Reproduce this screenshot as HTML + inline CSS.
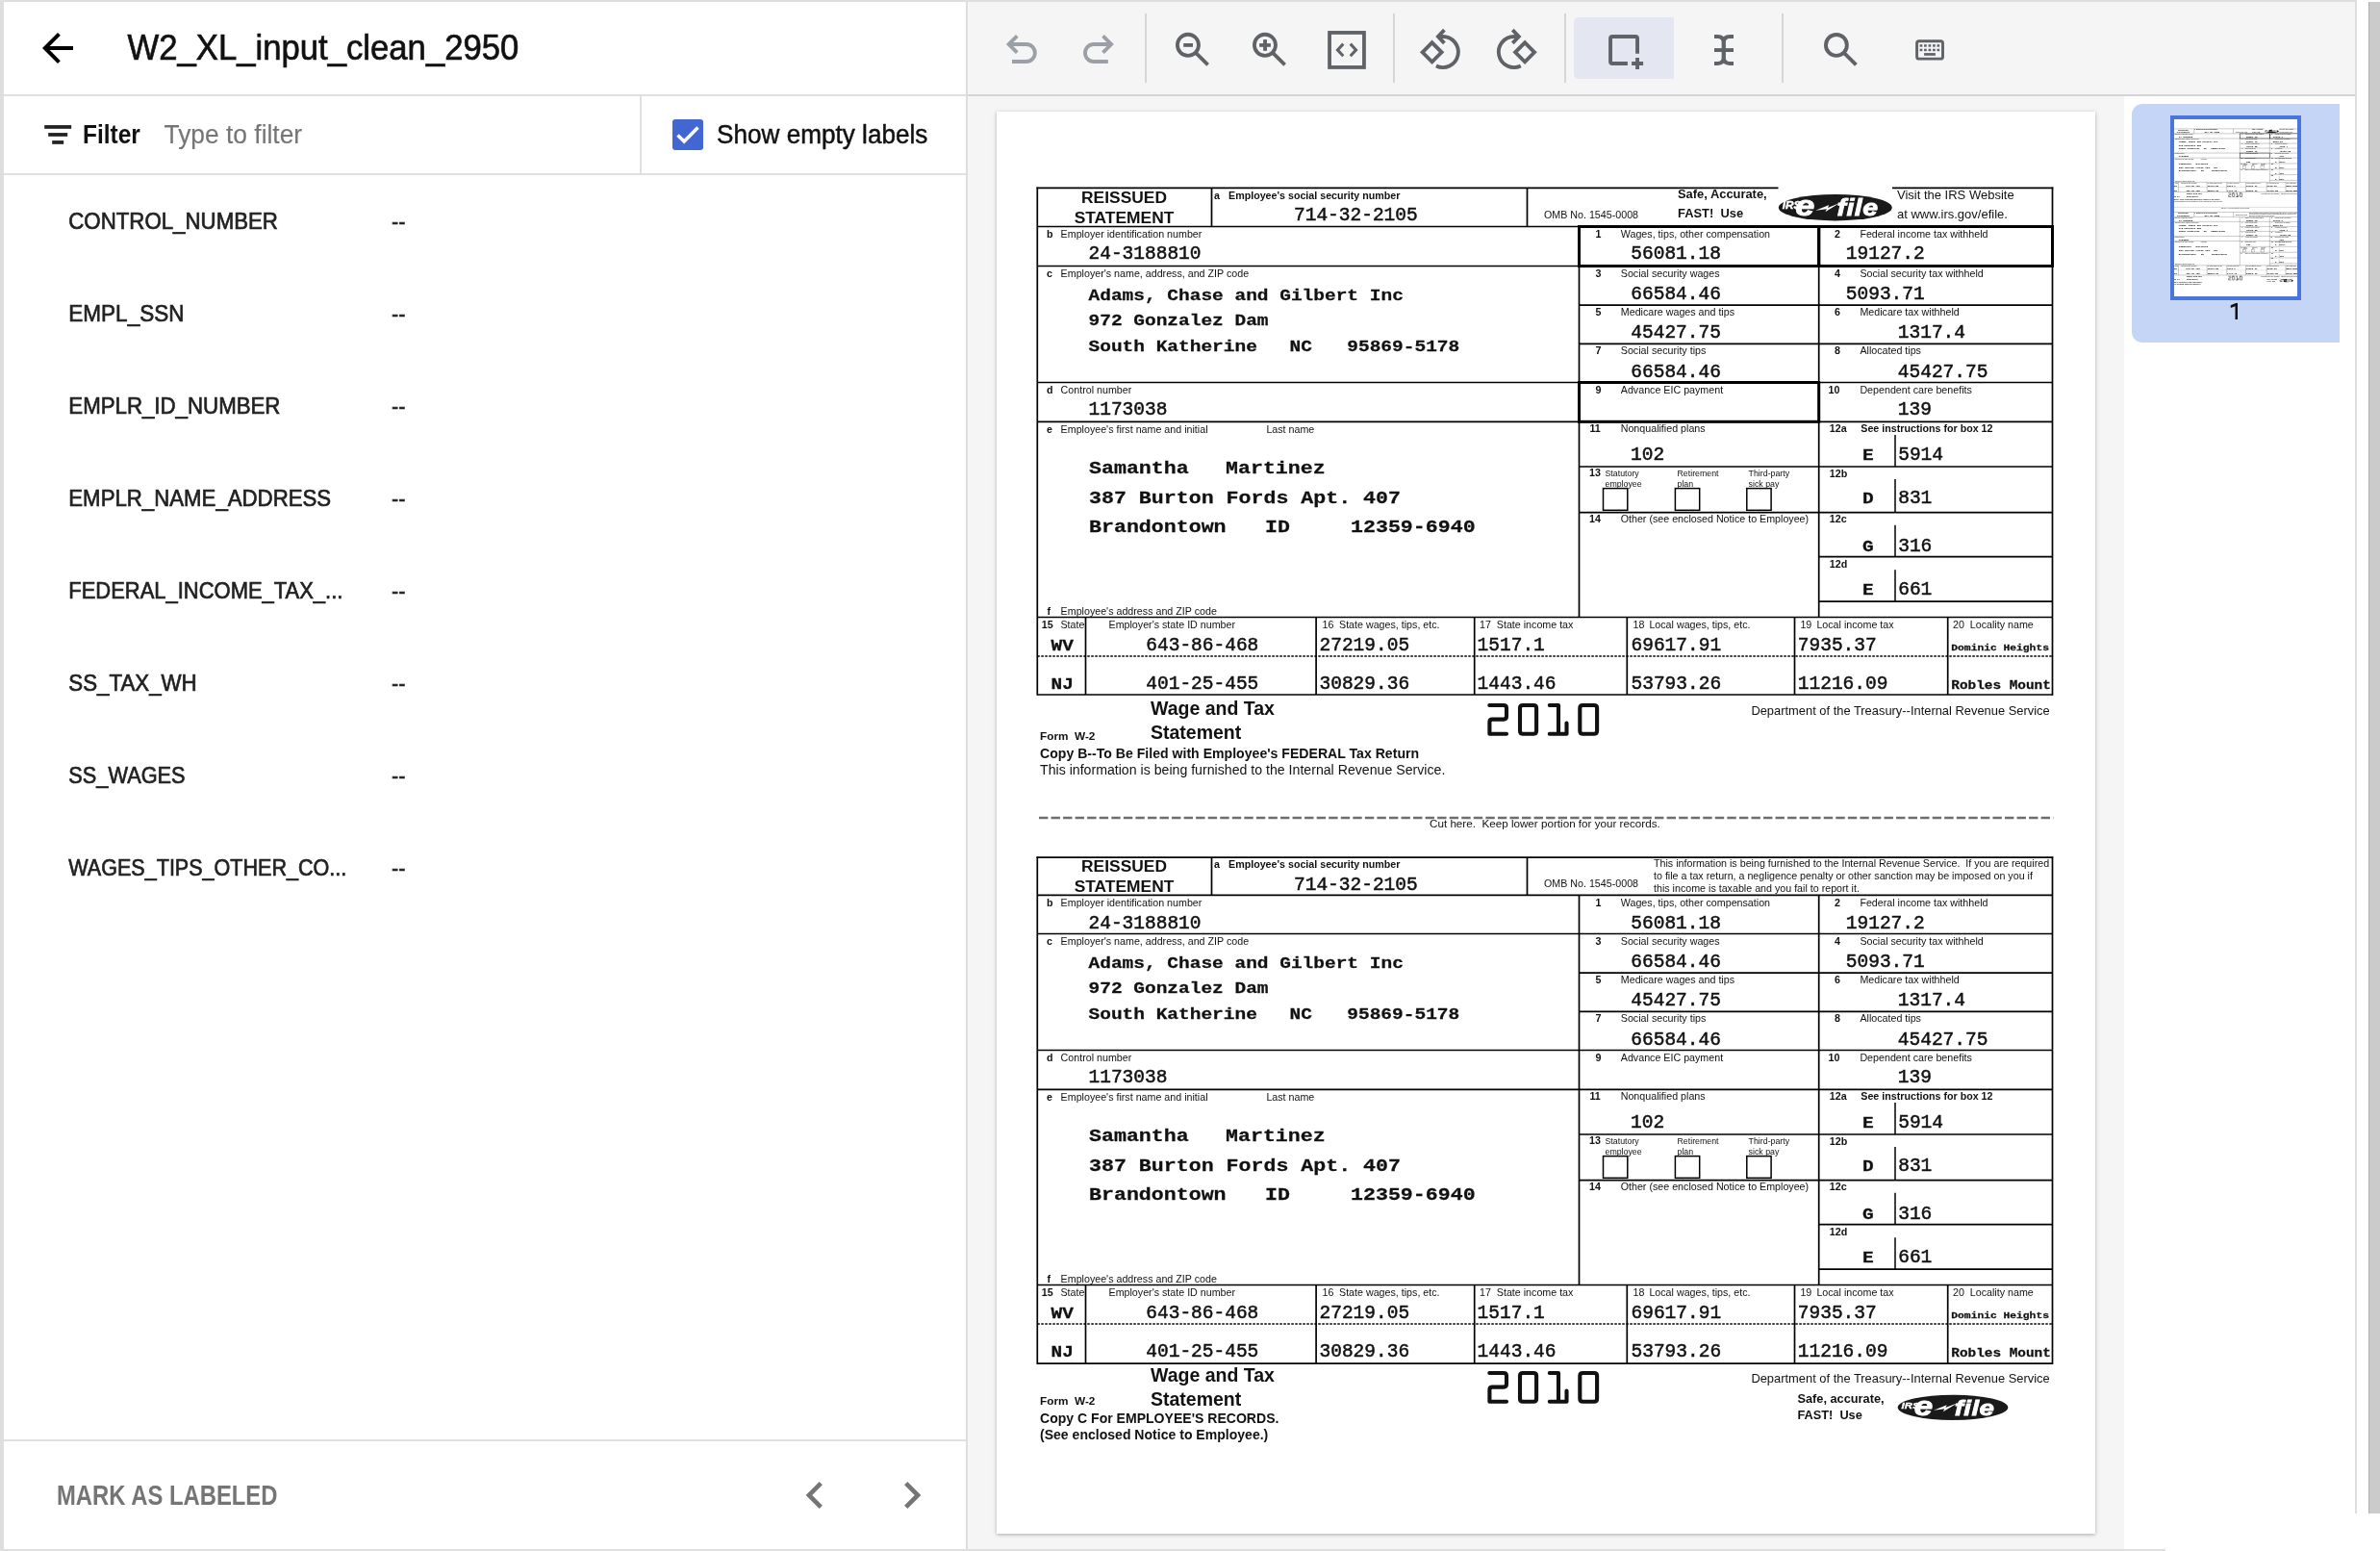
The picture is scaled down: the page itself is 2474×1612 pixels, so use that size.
<!DOCTYPE html>
<html><head><meta charset="utf-8"><title>W2_XL_input_clean_2950</title>
<style>
html,body{margin:0;padding:0;width:2474px;height:1612px;overflow:hidden;background:#fff}
body{position:relative;font-family:"Liberation Sans",sans-serif}
.a{position:absolute}
.S{font-family:"Liberation Sans",sans-serif}
.M{font-family:"Liberation Mono",monospace}
.lab{position:absolute;left:72px;font-size:22px;line-height:24px;color:#212121;white-space:pre}
.dash{position:absolute;left:407px;font-size:22px;line-height:24px;color:#212121}
</style></head>
<body>
<div style="position:absolute;left:0;top:0;width:2474px;height:1612px;overflow:hidden;will-change:transform">
<!-- frame -->
<div class="a" style="left:0;top:0;width:2450px;height:2px;background:#dedede"></div>
<div class="a" style="left:0;top:0;width:4px;height:1612px;background:#dedede"></div>
<div class="a" style="left:0;top:1610px;width:2251px;height:2px;background:#dedede"></div>
<!-- left panel -->
<div class="a" style="left:4px;top:98px;width:1001px;height:2px;background:#e0e0e0"></div>
<div class="a" style="left:4px;top:180px;width:1001px;height:2px;background:#e0e0e0"></div>
<div class="a" style="left:665px;top:100px;width:2px;height:80px;background:#e0e0e0"></div>
<div class="a" style="left:4px;top:1496px;width:1001px;height:2px;background:#e0e0e0"></div>
<div class="a" style="left:1004px;top:0;width:2px;height:1612px;background:#dedede"></div>
<svg class="a" style="left:36px;top:26px" width="48" height="48" viewBox="0 0 24 24" fill="#000"><path d="M20 11H7.83l5.59-5.59L12 4l-8 8 8 8 1.41-1.41L7.83 13H20v-2z"/></svg>
<svg class="a" style="left:42px;top:120px" width="36" height="36" viewBox="0 0 36 36" fill="#212121"><rect x="4.2" y="10.1" width="28" height="3.7"/><rect x="8.2" y="18.1" width="20" height="3.7"/><rect x="12.2" y="26.1" width="12" height="3.7"/></svg>
<div class="a" style="left:699px;top:124px;width:32px;height:32px;background:#4266d2;border-radius:3px"></div>
<svg class="a" style="left:699px;top:124px" width="32" height="32" viewBox="0 0 32 32"><path d="M5.5 16.5 L12.2 23 L26.5 8.5" fill="none" stroke="#fff" stroke-width="3.6"/></svg>
<svg class="a" style="left:819px;top:1526px" width="56" height="56" viewBox="0 0 24 24" fill="#757575"><path d="M15.41 7.41L14 6l-6 6 6 6 1.41-1.41L10.83 12z"/></svg>
<svg class="a" style="left:920px;top:1526px" width="56" height="56" viewBox="0 0 24 24" fill="#757575"><path d="M10 6L8.59 7.41 13.17 12l-4.58 4.59L10 18l6-6z"/></svg>
<svg class="a" style="left:0;top:0" width="1006" height="1612">
<text class="S" transform="matrix(0.925,0,0,1.0,132.5,62)" font-size="37.5" stroke="#111" stroke-width="0.7" fill="#111" style="white-space:pre">W2_XL_input_clean_2950</text>
<text class="S" transform="matrix(0.9,0,0,1.0,86,149)" font-size="27.2" font-weight="700" fill="#111" style="white-space:pre">Filter</text>
<text class="S" transform="matrix(0.97,0,0,1.0,170.5,149)" font-size="27.2" stroke="#757575" stroke-width="0.15" fill="#757575" style="white-space:pre">Type to filter</text>
<text class="S" transform="matrix(0.927,0,0,1.0,745,149.4)" font-size="28.2" stroke="#111" stroke-width="0.5" fill="#111" style="white-space:pre">Show empty labels</text>
<text class="S" transform="matrix(0.9018,0,0,1.0,71.3,238)" font-size="24.7" stroke="#212121" stroke-width="0.7" fill="#212121" style="white-space:pre">CONTROL_NUMBER</text>
<text class="S" transform="matrix(0.88,0,0,1.0,407,238)" font-size="24.7" stroke="#212121" stroke-width="0.5" fill="#212121" style="white-space:pre">--</text>
<text class="S" transform="matrix(0.9126,0,0,1.0,71.3,334)" font-size="24.7" stroke="#212121" stroke-width="0.7" fill="#212121" style="white-space:pre">EMPL_SSN</text>
<text class="S" transform="matrix(0.88,0,0,1.0,407,334)" font-size="24.7" stroke="#212121" stroke-width="0.5" fill="#212121" style="white-space:pre">--</text>
<text class="S" transform="matrix(0.9018,0,0,1.0,71.3,430)" font-size="24.7" stroke="#212121" stroke-width="0.7" fill="#212121" style="white-space:pre">EMPLR_ID_NUMBER</text>
<text class="S" transform="matrix(0.88,0,0,1.0,407,430)" font-size="24.7" stroke="#212121" stroke-width="0.5" fill="#212121" style="white-space:pre">--</text>
<text class="S" transform="matrix(0.9,0,0,1.0,71.3,526)" font-size="24.7" stroke="#212121" stroke-width="0.7" fill="#212121" style="white-space:pre">EMPLR_NAME_ADDRESS</text>
<text class="S" transform="matrix(0.88,0,0,1.0,407,526)" font-size="24.7" stroke="#212121" stroke-width="0.5" fill="#212121" style="white-space:pre">--</text>
<text class="S" transform="matrix(0.8892,0,0,1.0,71.3,622)" font-size="24.7" stroke="#212121" stroke-width="0.7" fill="#212121" style="white-space:pre">FEDERAL_INCOME_TAX_...</text>
<text class="S" transform="matrix(0.88,0,0,1.0,407,622)" font-size="24.7" stroke="#212121" stroke-width="0.5" fill="#212121" style="white-space:pre">--</text>
<text class="S" transform="matrix(0.9036,0,0,1.0,71.3,718)" font-size="24.7" stroke="#212121" stroke-width="0.7" fill="#212121" style="white-space:pre">SS_TAX_WH</text>
<text class="S" transform="matrix(0.88,0,0,1.0,407,718)" font-size="24.7" stroke="#212121" stroke-width="0.5" fill="#212121" style="white-space:pre">--</text>
<text class="S" transform="matrix(0.8811,0,0,1.0,71.3,814)" font-size="24.7" stroke="#212121" stroke-width="0.7" fill="#212121" style="white-space:pre">SS_WAGES</text>
<text class="S" transform="matrix(0.88,0,0,1.0,407,814)" font-size="24.7" stroke="#212121" stroke-width="0.5" fill="#212121" style="white-space:pre">--</text>
<text class="S" transform="matrix(0.873,0,0,1.0,71.3,910)" font-size="24.7" stroke="#212121" stroke-width="0.7" fill="#212121" style="white-space:pre">WAGES_TIPS_OTHER_CO...</text>
<text class="S" transform="matrix(0.88,0,0,1.0,407,910)" font-size="24.7" stroke="#212121" stroke-width="0.5" fill="#212121" style="white-space:pre">--</text>
<text class="S" transform="matrix(0.822,0,0,1.0,59,1564)" font-size="29" font-weight="700" fill="#757575" style="white-space:pre">MARK AS LABELED</text>
</svg>
<!-- toolbar -->
<div class="a" style="left:1006px;top:2px;width:1442px;height:96px;background:#f5f5f5"></div>
<div class="a" style="left:1006px;top:98px;width:1442px;height:2px;background:#d4d4d4"></div>
<div class="a" style="left:1190px;top:14px;width:2px;height:72px;background:#d6d6d6"></div>
<div class="a" style="left:1448px;top:14px;width:2px;height:72px;background:#d6d6d6"></div>
<div class="a" style="left:1626px;top:14px;width:2px;height:72px;background:#d6d6d6"></div>
<div class="a" style="left:1852px;top:14px;width:2px;height:72px;background:#d6d6d6"></div>
<svg class="a" style="left:0;top:0" width="2474" height="100"><g fill="none" stroke="#9aa0a6" stroke-width="3.8"><path d="M1057.3,37.3 L1048.6,46 L1057.3,54.7 M1049,46 H1066.85 A9,9 0 0 1 1066.85,64 H1052"/><path transform="translate(2203.8,0) scale(-1,1)" d="M1057.3,37.3 L1048.6,46 L1057.3,54.7 M1049,46 H1066.85 A9,9 0 0 1 1066.85,64 H1052"/></g><g fill="none" stroke="#5f6368" stroke-width="3.8"><circle cx="1234.95" cy="46.8" r="11.05"/><path d="M1242.8,54.6 L1255.6,67.4"/><circle cx="1314.95" cy="46.8" r="11.05"/><path d="M1322.8,54.6 L1335.6,67.4"/><rect x="1382.05" y="33.95" width="35.9" height="36"/></g><g fill="#5f6368"><rect x="1230.2" y="45" width="9.8" height="3.8"/><rect x="1309.1" y="45.1" width="11.8" height="3.7"/><rect x="1313.1" y="41.1" width="3.9" height="11.7"/></g><g fill="none" stroke="#5f6368" stroke-width="3"><path d="M1396.3,45.6 L1390.4,51.9 L1396.3,58.2"/><path d="M1403.7,45.6 L1409.6,51.9 L1403.7,58.2"/></g><g fill="none" stroke="#5f6368" stroke-width="3.85"><path d="M1478.63,54.3 L1488.6,44.33 L1498.57,54.3 L1488.6,64.27 Z"/><path d="M1501.4,31.2 L1494.9,38 L1501.4,44.8"/><path d="M1495.5,38 H1499.8 A16.05,16.05 0 1 1 1492.9,68.54"/><g transform="translate(3073.7,0) scale(-1,1)"><path d="M1478.63,54.3 L1488.6,44.33 L1498.57,54.3 L1488.6,64.27 Z"/><path d="M1501.4,31.2 L1494.9,38 L1501.4,44.8"/><path d="M1495.5,38 H1499.8 A16.05,16.05 0 1 1 1492.9,68.54"/></g></g><rect x="1636" y="18" width="104" height="64" rx="5" fill="#e4e7f2"/><rect x="1730" y="18" width="10" height="64" fill="#e4e7f2"/><g fill="none" stroke="#5f6368" stroke-width="3.9"><path d="M1691.9,65.95 H1676.05 Q1674.05,65.95 1674.05,63.95 V39.95 Q1674.05,37.95 1676.05,37.95 H1700.05 Q1702.05,37.95 1702.05,39.95 V55.8"/><path d="M1702.05,60.1 V71.9 M1696.1,65.95 H1708.1"/><path d="M1782,38.05 H1785.5 Q1791.75,38.05 1791.75,44.5 V59.5 Q1791.75,65.95 1785.5,65.95 H1782"/><path d="M1802,38.05 H1798 Q1791.75,38.05 1791.75,44.5 V59.5 Q1791.75,65.95 1798,65.95 H1802"/><path d="M1782,52.05 H1802"/><circle cx="1908.9" cy="46.9" r="10.95"/><path d="M1916.8,54.8 L1929.4,67.4"/></g><rect x="1992.6" y="42.8" width="26.9" height="18.3" rx="2.2" fill="none" stroke="#5f6368" stroke-width="2.9"/><g fill="#5f6368"><rect x="1995.60" y="46.2" width="2.7" height="2.5"/><rect x="1995.60" y="50.7" width="2.7" height="2.5"/><rect x="2000.08" y="46.2" width="2.7" height="2.5"/><rect x="2000.08" y="50.7" width="2.7" height="2.5"/><rect x="2004.56" y="46.2" width="2.7" height="2.5"/><rect x="2004.56" y="50.7" width="2.7" height="2.5"/><rect x="2009.04" y="46.2" width="2.7" height="2.5"/><rect x="2009.04" y="50.7" width="2.7" height="2.5"/><rect x="2013.52" y="46.2" width="2.7" height="2.5"/><rect x="2013.52" y="50.7" width="2.7" height="2.5"/><rect x="2000.1" y="55.1" width="11.8" height="2.7"/></g></svg>
<!-- document viewer -->
<div class="a" style="left:1006px;top:100px;width:1202px;height:1510px;background:#f5f5f5"></div>
<div class="a" style="left:1036px;top:116px;width:1142px;height:1478px;background:#fff;box-shadow:0 1px 3px rgba(0,0,0,.22),0 1px 6px rgba(0,0,0,.10)"></div>
<svg class="a" style="left:0;top:0;overflow:visible" width="2474" height="1612">
<line x1="1077.5" y1="195.3" x2="1848.5" y2="195.3" stroke="#000" stroke-width="1.7"/>
<line x1="1967.0" y1="195.3" x2="2134.3" y2="195.3" stroke="#000" stroke-width="1.7"/>
<line x1="1078.3" y1="194.5" x2="1078.3" y2="722.8" stroke="#000" stroke-width="1.7"/>
<line x1="2133.5" y1="194.5" x2="2133.5" y2="722.8" stroke="#000" stroke-width="1.7"/>
<line x1="1078.3" y1="235.5" x2="2133.5" y2="235.5" stroke="#000" stroke-width="1.7"/>
<line x1="1259.5" y1="195.3" x2="1259.5" y2="235.5" stroke="#000" stroke-width="1.7"/>
<line x1="1587.5" y1="195.3" x2="1587.5" y2="235.5" stroke="#000" stroke-width="1.7"/>
<line x1="1078.3" y1="276.5" x2="2133.5" y2="276.5" stroke="#000" stroke-width="1.7"/>
<line x1="1078.3" y1="397.5" x2="2133.5" y2="397.5" stroke="#000" stroke-width="1.7"/>
<line x1="1078.3" y1="438.3" x2="2133.5" y2="438.3" stroke="#000" stroke-width="1.7"/>
<line x1="1078.3" y1="641.5" x2="2133.5" y2="641.5" stroke="#000" stroke-width="1.7"/>
<line x1="1078.3" y1="722.0" x2="2133.5" y2="722.0" stroke="#000" stroke-width="1.7"/>
<line x1="1641.5" y1="317.2" x2="2133.5" y2="317.2" stroke="#000" stroke-width="1.7"/>
<line x1="1641.5" y1="357.4" x2="2133.5" y2="357.4" stroke="#000" stroke-width="1.7"/>
<line x1="1641.5" y1="485.0" x2="2133.5" y2="485.0" stroke="#000" stroke-width="1.7"/>
<line x1="1641.5" y1="532.6" x2="2133.5" y2="532.6" stroke="#000" stroke-width="1.7"/>
<line x1="1890.7" y1="578.6" x2="2133.5" y2="578.6" stroke="#000" stroke-width="1.7"/>
<line x1="1890.7" y1="625.1" x2="2133.5" y2="625.1" stroke="#000" stroke-width="1.7"/>
<line x1="1641.5" y1="235.5" x2="1641.5" y2="641.5" stroke="#000" stroke-width="1.7"/>
<line x1="1890.7" y1="235.5" x2="1890.7" y2="641.5" stroke="#000" stroke-width="1.7"/>
<line x1="1970.0" y1="452.0" x2="1970.0" y2="485.0" stroke="#000" stroke-width="1.5"/>
<line x1="1970.0" y1="498.0" x2="1970.0" y2="532.6" stroke="#000" stroke-width="1.5"/>
<line x1="1970.0" y1="545.7" x2="1970.0" y2="578.6" stroke="#000" stroke-width="1.5"/>
<line x1="1970.0" y1="592.2" x2="1970.0" y2="625.1" stroke="#000" stroke-width="1.5"/>
<line x1="1128.5" y1="641.5" x2="1128.5" y2="722.0" stroke="#000" stroke-width="1.7"/>
<line x1="1368.1" y1="641.5" x2="1368.1" y2="722.0" stroke="#000" stroke-width="1.7"/>
<line x1="1532.7" y1="641.5" x2="1532.7" y2="722.0" stroke="#000" stroke-width="1.7"/>
<line x1="1691.3" y1="641.5" x2="1691.3" y2="722.0" stroke="#000" stroke-width="1.7"/>
<line x1="1865.5" y1="641.5" x2="1865.5" y2="722.0" stroke="#000" stroke-width="1.7"/>
<line x1="2024.7" y1="641.5" x2="2024.7" y2="722.0" stroke="#000" stroke-width="1.7"/>
<line x1="1078.3" y1="682.0" x2="2133.5" y2="682.0" stroke="#000" stroke-width="1.4" stroke-dasharray="2.5 1.5"/>
<rect x="1641.5" y="235.5" width="249.2" height="41.0" fill="none" stroke="#000" stroke-width="3.0"/>
<rect x="1890.7" y="235.5" width="242.8" height="41.0" fill="none" stroke="#000" stroke-width="3.0"/>
<rect x="1641.5" y="397.5" width="249.2" height="40.8" fill="none" stroke="#000" stroke-width="3.0"/>
<rect x="1666.5" y="507.6" width="25.3" height="22.7" fill="none" stroke="#000" stroke-width="1.5"/>
<rect x="1741.4" y="507.6" width="25.3" height="22.7" fill="none" stroke="#000" stroke-width="1.5"/>
<rect x="1815.8" y="507.6" width="25.3" height="22.7" fill="none" stroke="#000" stroke-width="1.5"/>
<text class="S" x="1168.5" y="210.5" font-size="17.4" font-weight="700" text-anchor="middle" fill="#111">REISSUED</text>
<text class="S" x="1168.5" y="232.0" font-size="17.4" font-weight="700" text-anchor="middle" fill="#111">STATEMENT</text>
<text class="S" x="1262.0" y="207.0" font-size="10.7" font-weight="700" fill="#111">a</text>
<text class="S" x="1277.0" y="207.0" font-size="10.7" font-weight="700" fill="#111">Employee's social security number</text>
<text class="M" x="1345.0" y="228.7" font-size="19.5" stroke="#111" stroke-width="0.5" fill="#111">714-32-2105</text>
<text class="S" x="1605.0" y="226.8" font-size="10.7" fill="#111">OMB No. 1545-0008</text>
<text class="S" x="1744.0" y="206.3" font-size="12.9" font-weight="700" fill="#111">Safe, Accurate,</text>
<text class="S" x="1744.0" y="226.3" font-size="12.9" font-weight="700" fill="#111" style="white-space:pre">FAST!  Use</text>
<g transform="translate(1907.8,215.7) scale(1.000,1.000)"><ellipse cx="0" cy="0" rx="59" ry="13.7" fill="#1a1a1a"/><text class="S" transform="matrix(1.15,0,0,1,-55,1)" font-size="10.2" font-weight="700" font-style="italic" fill="#fff" stroke="#fff" stroke-width="0.4">IRS</text><text class="S" transform="matrix(1.22,0,0,1,-41.5,8.6)" font-size="29.5" font-weight="700" font-style="italic" fill="#fff" stroke="#fff" stroke-width="0.9">e</text><path d="M-20.5,3 L-6.5,-2.6 L-7.8,0.2 L4.5,-4.6 L-10.5,4.6 L-8.9,1.6 Z" fill="#fff"/><text class="S" transform="matrix(1.2,0,0,1,1.7,8.3)" font-size="23.7" font-weight="700" font-style="italic" fill="#fff" stroke="#fff" stroke-width="0.8" letter-spacing="0.4">file</text></g>
<text class="S" x="1972.0" y="207.3" font-size="13" fill="#111">Visit the IRS Website</text>
<text class="S" x="1972.0" y="226.8" font-size="13" fill="#111">at www.irs.gov/efile.</text>
<text class="S" x="1088.0" y="247.0" font-size="10.7" font-weight="700" fill="#111">b</text>
<text class="S" x="1102.6" y="247.0" font-size="10.7" fill="#111">Employer identification number</text>
<text class="M" x="1131.5" y="269.0" font-size="19.5" stroke="#111" stroke-width="0.5" fill="#111">24-3188810</text>
<text class="S" x="1088.0" y="288.0" font-size="10.7" font-weight="700" fill="#111">c</text>
<text class="S" x="1102.6" y="288.0" font-size="10.7" fill="#111">Employer's name, address, and ZIP code</text>
<text class="M" transform="matrix(1,0,0,0.857,1131.5,311.6)" font-size="19.5" font-weight="700" stroke="#111" stroke-width="0.3" fill="#111">Adams, Chase and Gilbert Inc</text>
<text class="M" transform="matrix(1,0,0,0.857,1131.5,338.4)" font-size="19.5" font-weight="700" stroke="#111" stroke-width="0.3" fill="#111">972 Gonzalez Dam</text>
<text class="M" transform="matrix(1,0,0,0.857,1131.5,365.2)" font-size="19.5" font-weight="700" stroke="#111" stroke-width="0.3" fill="#111">South Katherine</text>
<text class="M" transform="matrix(1,0,0,0.857,1340.5,365.2)" font-size="19.5" font-weight="700" stroke="#111" stroke-width="0.3" fill="#111">NC</text>
<text class="M" transform="matrix(1,0,0,0.857,1400.3,365.2)" font-size="19.5" font-weight="700" stroke="#111" stroke-width="0.3" fill="#111">95869-5178</text>
<text class="S" x="1088.0" y="409.0" font-size="10.7" font-weight="700" fill="#111">d</text>
<text class="S" x="1102.6" y="409.0" font-size="10.7" fill="#111">Control number</text>
<text class="M" x="1131.5" y="431.0" font-size="19.5" stroke="#111" stroke-width="0.5" fill="#111">1173038</text>
<text class="S" x="1088.0" y="449.5" font-size="10.7" font-weight="700" fill="#111">e</text>
<text class="S" x="1102.6" y="449.5" font-size="10.7" fill="#111">Employee's first name and initial</text>
<text class="S" x="1316.4" y="449.5" font-size="10.7" fill="#111">Last name</text>
<text class="M" transform="matrix(1,0,0,0.857,1132.0,492.1)" font-size="21.6" font-weight="700" stroke="#111" stroke-width="0.3" fill="#111">Samantha</text>
<text class="M" transform="matrix(1,0,0,0.857,1274.0,492.1)" font-size="21.6" font-weight="700" stroke="#111" stroke-width="0.3" fill="#111">Martinez</text>
<text class="M" transform="matrix(1,0,0,0.857,1132.0,523.3)" font-size="21.6" font-weight="700" stroke="#111" stroke-width="0.3" fill="#111">387 Burton Fords Apt. 407</text>
<text class="M" transform="matrix(1,0,0,0.857,1132.0,553.0)" font-size="21.6" font-weight="700" stroke="#111" stroke-width="0.3" fill="#111">Brandontown</text>
<text class="M" transform="matrix(1,0,0,0.857,1315.0,553.0)" font-size="21.6" font-weight="700" stroke="#111" stroke-width="0.3" fill="#111">ID</text>
<text class="M" transform="matrix(1,0,0,0.857,1404.0,553.0)" font-size="21.6" font-weight="700" stroke="#111" stroke-width="0.3" fill="#111">12359-6940</text>
<text class="S" x="1088.5" y="638.9" font-size="10.7" font-weight="700" fill="#111">f</text>
<text class="S" x="1102.6" y="638.9" font-size="10.7" fill="#111">Employee's address and ZIP code</text>
<text class="S" x="1658.5" y="247.0" font-size="10.7" font-weight="700" fill="#111">1</text>
<text class="S" x="1684.8" y="247.0" font-size="10.7" fill="#111">Wages, tips, other compensation</text>
<text class="M" x="1695.3" y="269.0" font-size="19.5" stroke="#111" stroke-width="0.5" fill="#111">56081.18</text>
<text class="S" x="1907.0" y="247.0" font-size="10.7" font-weight="700" fill="#111">2</text>
<text class="S" x="1933.4" y="247.0" font-size="10.7" fill="#111">Federal income tax withheld</text>
<text class="M" x="1918.8" y="269.0" font-size="19.5" stroke="#111" stroke-width="0.5" fill="#111">19127.2</text>
<text class="S" x="1658.5" y="288.0" font-size="10.7" font-weight="700" fill="#111">3</text>
<text class="S" x="1684.8" y="288.0" font-size="10.7" fill="#111">Social security wages</text>
<text class="M" x="1695.3" y="310.9" font-size="19.5" stroke="#111" stroke-width="0.5" fill="#111">66584.46</text>
<text class="S" x="1907.0" y="288.0" font-size="10.7" font-weight="700" fill="#111">4</text>
<text class="S" x="1933.4" y="288.0" font-size="10.7" fill="#111">Social security tax withheld</text>
<text class="M" x="1918.8" y="310.9" font-size="19.5" stroke="#111" stroke-width="0.5" fill="#111">5093.71</text>
<text class="S" x="1658.5" y="328.2" font-size="10.7" font-weight="700" fill="#111">5</text>
<text class="S" x="1684.8" y="328.2" font-size="10.7" fill="#111">Medicare wages and tips</text>
<text class="M" x="1695.3" y="351.3" font-size="19.5" stroke="#111" stroke-width="0.5" fill="#111">45427.75</text>
<text class="S" x="1907.0" y="328.2" font-size="10.7" font-weight="700" fill="#111">6</text>
<text class="S" x="1933.4" y="328.2" font-size="10.7" fill="#111">Medicare tax withheld</text>
<text class="M" x="1972.8" y="351.3" font-size="19.5" stroke="#111" stroke-width="0.5" fill="#111">1317.4</text>
<text class="S" x="1658.5" y="368.4" font-size="10.7" font-weight="700" fill="#111">7</text>
<text class="S" x="1684.8" y="368.4" font-size="10.7" fill="#111">Social security tips</text>
<text class="M" x="1695.3" y="391.6" font-size="19.5" stroke="#111" stroke-width="0.5" fill="#111">66584.46</text>
<text class="S" x="1907.0" y="368.4" font-size="10.7" font-weight="700" fill="#111">8</text>
<text class="S" x="1933.4" y="368.4" font-size="10.7" fill="#111">Allocated tips</text>
<text class="M" x="1972.8" y="391.6" font-size="19.5" stroke="#111" stroke-width="0.5" fill="#111">45427.75</text>
<text class="S" x="1658.5" y="409.1" font-size="10.7" font-weight="700" fill="#111">9</text>
<text class="S" x="1684.8" y="409.1" font-size="10.7" fill="#111">Advance EIC payment</text>
<text class="S" x="1900.5" y="409.1" font-size="10.7" font-weight="700" fill="#111">10</text>
<text class="S" x="1933.4" y="409.1" font-size="10.7" fill="#111">Dependent care benefits</text>
<text class="M" x="1972.8" y="431.0" font-size="19.5" stroke="#111" stroke-width="0.5" fill="#111">139</text>
<text class="S" x="1652.4" y="449.3" font-size="10.7" font-weight="700" fill="#111">11</text>
<text class="S" x="1684.7" y="449.3" font-size="10.7" fill="#111">Nonqualified plans</text>
<text class="M" x="1695.0" y="478.0" font-size="19.5" stroke="#111" stroke-width="0.5" fill="#111">102</text>
<text class="S" x="1652.0" y="494.7" font-size="10.7" font-weight="700" fill="#111">13</text>
<text class="S" x="1668.5" y="494.7" font-size="8.8" fill="#111">Statutory</text>
<text class="S" x="1668.5" y="505.6" font-size="8.8" fill="#111">employee</text>
<text class="S" x="1743.5" y="494.7" font-size="8.8" fill="#111">Retirement</text>
<text class="S" x="1743.5" y="505.6" font-size="8.8" fill="#111">plan</text>
<text class="S" x="1817.6" y="494.7" font-size="8.8" fill="#111">Third-party</text>
<text class="S" x="1817.6" y="505.6" font-size="8.8" fill="#111">sick pay</text>
<text class="S" x="1652.0" y="542.8" font-size="10.7" font-weight="700" fill="#111">14</text>
<text class="S" x="1684.7" y="542.8" font-size="10.7" fill="#111">Other (see enclosed Notice to Employee)</text>
<text class="S" x="1901.8" y="449.3" font-size="10.7" font-weight="700" fill="#111">12a</text>
<text class="S" x="1934.3" y="449.3" font-size="10.7" font-weight="700" fill="#111">See instructions for box 12</text>
<text class="M" transform="matrix(1,0,0,0.857,1936.0,478.0)" font-size="19.5" font-weight="700" stroke="#111" stroke-width="0.3" fill="#111">E</text>
<text class="M" x="1973.2" y="478.0" font-size="19.5" stroke="#111" stroke-width="0.5" fill="#111">5914</text>
<text class="S" x="1901.8" y="495.8" font-size="10.7" font-weight="700" fill="#111">12b</text>
<text class="M" transform="matrix(1,0,0,0.857,1936.0,523.0)" font-size="19.5" font-weight="700" stroke="#111" stroke-width="0.3" fill="#111">D</text>
<text class="M" x="1973.2" y="523.0" font-size="19.5" stroke="#111" stroke-width="0.5" fill="#111">831</text>
<text class="S" x="1901.8" y="542.8" font-size="10.7" font-weight="700" fill="#111">12c</text>
<text class="M" transform="matrix(1,0,0,0.857,1936.0,572.5)" font-size="19.5" font-weight="700" stroke="#111" stroke-width="0.3" fill="#111">G</text>
<text class="M" x="1973.2" y="572.5" font-size="19.5" stroke="#111" stroke-width="0.5" fill="#111">316</text>
<text class="S" x="1901.8" y="589.5" font-size="10.7" font-weight="700" fill="#111">12d</text>
<text class="M" transform="matrix(1,0,0,0.857,1936.0,618.3)" font-size="19.5" font-weight="700" stroke="#111" stroke-width="0.3" fill="#111">E</text>
<text class="M" x="1973.2" y="618.3" font-size="19.5" stroke="#111" stroke-width="0.5" fill="#111">661</text>
<text class="S" x="1082.7" y="653.1" font-size="10.7" font-weight="700" fill="#111">15</text>
<text class="S" x="1102.4" y="653.1" font-size="10.7" fill="#111">State</text>
<text class="S" x="1152.5" y="653.1" font-size="10.7" fill="#111">Employer's state ID number</text>
<text class="S" x="1374.6" y="653.1" font-size="10.7" fill="#111">16</text>
<text class="S" x="1392.0" y="653.1" font-size="10.7" fill="#111">State wages, tips, etc.</text>
<text class="S" x="1538.0" y="653.1" font-size="10.7" fill="#111">17</text>
<text class="S" x="1555.8" y="653.1" font-size="10.7" fill="#111">State income tax</text>
<text class="S" x="1697.5" y="653.1" font-size="10.7" fill="#111">18</text>
<text class="S" x="1714.4" y="653.1" font-size="10.7" fill="#111">Local wages, tips, etc.</text>
<text class="S" x="1871.4" y="653.1" font-size="10.7" fill="#111">19</text>
<text class="S" x="1888.4" y="653.1" font-size="10.7" fill="#111">Local income tax</text>
<text class="S" x="2030.0" y="653.1" font-size="10.7" fill="#111">20</text>
<text class="S" x="2047.8" y="653.1" font-size="10.7" fill="#111">Locality name</text>
<text class="M" transform="matrix(1,0,0,0.857,1092.5,675.5)" font-size="19.5" font-weight="700" stroke="#111" stroke-width="0.3" fill="#111">WV</text>
<text class="M" x="1191.3" y="675.5" font-size="19.5" stroke="#111" stroke-width="0.5" fill="#111">643-86-468</text>
<text class="M" x="1371.5" y="675.5" font-size="19.5" stroke="#111" stroke-width="0.5" fill="#111">27219.05</text>
<text class="M" x="1535.6" y="675.5" font-size="19.5" stroke="#111" stroke-width="0.5" fill="#111">1517.1</text>
<text class="M" x="1695.5" y="675.5" font-size="19.5" stroke="#111" stroke-width="0.5" fill="#111">69617.91</text>
<text class="M" x="1868.8" y="675.5" font-size="19.5" stroke="#111" stroke-width="0.5" fill="#111">7935.37</text>
<text class="M" transform="matrix(1,0,0,0.857,2028.3,676.2)" font-size="11.3" font-weight="700" stroke="#111" stroke-width="0.3" fill="#111">Dominic Heights</text>
<text class="M" transform="matrix(1,0,0,0.857,1092.5,715.5)" font-size="19.5" font-weight="700" stroke="#111" stroke-width="0.3" fill="#111">NJ</text>
<text class="M" x="1191.3" y="715.5" font-size="19.5" stroke="#111" stroke-width="0.5" fill="#111">401-25-455</text>
<text class="M" x="1371.5" y="715.5" font-size="19.5" stroke="#111" stroke-width="0.5" fill="#111">30829.36</text>
<text class="M" x="1535.6" y="715.5" font-size="19.5" stroke="#111" stroke-width="0.5" fill="#111">1443.46</text>
<text class="M" x="1695.5" y="715.5" font-size="19.5" stroke="#111" stroke-width="0.5" fill="#111">53793.26</text>
<text class="M" x="1868.8" y="715.5" font-size="19.5" stroke="#111" stroke-width="0.5" fill="#111">11216.09</text>
<text class="M" transform="matrix(1,0,0,0.857,2028.3,716.2)" font-size="14.4" font-weight="700" stroke="#111" stroke-width="0.3" fill="#111">Robles Mount</text>
<text class="S" x="1196.0" y="742.8" font-size="19.5" font-weight="700" fill="#111">Wage and Tax</text>
<text class="S" x="1196.0" y="767.5" font-size="19.5" font-weight="700" fill="#111">Statement</text>
<text class="S" x="1081.0" y="768.7" font-size="11.8" font-weight="700" fill="#111" style="white-space:pre">Form  W-2</text>
<g transform="translate(0,0)" fill="none" stroke="#111" stroke-width="4.1" stroke-linecap="round" stroke-linejoin="round"><path d="M1548.3,733 H1563 Q1566,733 1566,736 V744.6 Q1566,747.6 1563,747.6 H1551.3 Q1548.4,747.6 1548.4,750.6 V762.7 H1566"/><path d="M1583,733 H1594.1 Q1597.1,733 1597.1,736 V759.7 Q1597.1,762.7 1594.1,762.7 H1583 Q1580,762.7 1580,759.7 V736 Q1580,733 1583,733 Z"/><path d="M1610.8,733 H1620 V762.7 M1610.8,762.7 H1628.5 V751.5" /><path d="M1645.3,733 H1657.1 Q1660.1,733 1660.1,736 V759.7 Q1660.1,762.7 1657.1,762.7 H1645.3 Q1642.3,762.7 1642.3,759.7 V736 Q1642.3,733 1645.3,733 Z"/></g>
<text class="S" x="1820.4" y="743.0" font-size="12.9" fill="#111">Department of the Treasury--Internal Revenue Service</text>
<text class="S" x="1081.0" y="787.8" font-size="14.1" font-weight="700" fill="#111">Copy B--To Be Filed with Employee's FEDERAL Tax Return</text>
<text class="S" x="1081.0" y="805.0" font-size="14.15" fill="#111">This information is being furnished to the Internal Revenue Service.</text>
<line x1="1080.0" y1="850.0" x2="2134.5" y2="850.0" stroke="#6e6e6e" stroke-width="2.4" stroke-dasharray="9.4 3.15"/>
<text class="S" x="1486.0" y="860.3" font-size="11.67" fill="#111" style="white-space:pre">Cut here.  Keep lower portion for your records.</text>
<line x1="1077.5" y1="891.2" x2="2134.3" y2="891.2" stroke="#000" stroke-width="1.7"/>
<line x1="1078.3" y1="890.4" x2="1078.3" y2="1418.0" stroke="#000" stroke-width="1.7"/>
<line x1="2133.5" y1="890.4" x2="2133.5" y2="1418.0" stroke="#000" stroke-width="1.7"/>
<line x1="1078.3" y1="930.4" x2="2133.5" y2="930.4" stroke="#000" stroke-width="1.7"/>
<line x1="1259.5" y1="891.2" x2="1259.5" y2="930.4" stroke="#000" stroke-width="1.7"/>
<line x1="1587.5" y1="891.2" x2="1587.5" y2="930.4" stroke="#000" stroke-width="1.7"/>
<line x1="1078.3" y1="970.5" x2="2133.5" y2="970.5" stroke="#000" stroke-width="1.7"/>
<line x1="1078.3" y1="1091.5" x2="2133.5" y2="1091.5" stroke="#000" stroke-width="1.7"/>
<line x1="1078.3" y1="1132.3" x2="2133.5" y2="1132.3" stroke="#000" stroke-width="1.7"/>
<line x1="1078.3" y1="1335.5" x2="2133.5" y2="1335.5" stroke="#000" stroke-width="1.7"/>
<line x1="1078.3" y1="1417.2" x2="2133.5" y2="1417.2" stroke="#000" stroke-width="1.7"/>
<line x1="1641.5" y1="1011.2" x2="2133.5" y2="1011.2" stroke="#000" stroke-width="1.7"/>
<line x1="1641.5" y1="1051.4" x2="2133.5" y2="1051.4" stroke="#000" stroke-width="1.7"/>
<line x1="1641.5" y1="1179.0" x2="2133.5" y2="1179.0" stroke="#000" stroke-width="1.7"/>
<line x1="1641.5" y1="1226.6" x2="2133.5" y2="1226.6" stroke="#000" stroke-width="1.7"/>
<line x1="1890.7" y1="1272.6" x2="2133.5" y2="1272.6" stroke="#000" stroke-width="1.7"/>
<line x1="1890.7" y1="1319.1" x2="2133.5" y2="1319.1" stroke="#000" stroke-width="1.7"/>
<line x1="1641.5" y1="930.4" x2="1641.5" y2="1335.5" stroke="#000" stroke-width="1.7"/>
<line x1="1890.7" y1="930.4" x2="1890.7" y2="1335.5" stroke="#000" stroke-width="1.7"/>
<line x1="1970.0" y1="1146.0" x2="1970.0" y2="1179.0" stroke="#000" stroke-width="1.5"/>
<line x1="1970.0" y1="1192.0" x2="1970.0" y2="1226.6" stroke="#000" stroke-width="1.5"/>
<line x1="1970.0" y1="1239.7" x2="1970.0" y2="1272.6" stroke="#000" stroke-width="1.5"/>
<line x1="1970.0" y1="1286.2" x2="1970.0" y2="1319.1" stroke="#000" stroke-width="1.5"/>
<line x1="1128.5" y1="1335.5" x2="1128.5" y2="1417.2" stroke="#000" stroke-width="1.7"/>
<line x1="1368.1" y1="1335.5" x2="1368.1" y2="1417.2" stroke="#000" stroke-width="1.7"/>
<line x1="1532.7" y1="1335.5" x2="1532.7" y2="1417.2" stroke="#000" stroke-width="1.7"/>
<line x1="1691.3" y1="1335.5" x2="1691.3" y2="1417.2" stroke="#000" stroke-width="1.7"/>
<line x1="1865.5" y1="1335.5" x2="1865.5" y2="1417.2" stroke="#000" stroke-width="1.7"/>
<line x1="2024.7" y1="1335.5" x2="2024.7" y2="1417.2" stroke="#000" stroke-width="1.7"/>
<line x1="1078.3" y1="1376.0" x2="2133.5" y2="1376.0" stroke="#000" stroke-width="1.4" stroke-dasharray="2.5 1.5"/>
<rect x="1666.5" y="1201.6" width="25.3" height="22.7" fill="none" stroke="#000" stroke-width="1.5"/>
<rect x="1741.4" y="1201.6" width="25.3" height="22.7" fill="none" stroke="#000" stroke-width="1.5"/>
<rect x="1815.8" y="1201.6" width="25.3" height="22.7" fill="none" stroke="#000" stroke-width="1.5"/>
<text class="S" x="1168.5" y="906.0" font-size="17.4" font-weight="700" text-anchor="middle" fill="#111">REISSUED</text>
<text class="S" x="1168.5" y="927.0" font-size="17.4" font-weight="700" text-anchor="middle" fill="#111">STATEMENT</text>
<text class="S" x="1262.0" y="902.0" font-size="10.7" font-weight="700" fill="#111">a</text>
<text class="S" x="1277.0" y="902.0" font-size="10.7" font-weight="700" fill="#111">Employee's social security number</text>
<text class="M" x="1345.0" y="925.2" font-size="19.5" stroke="#111" stroke-width="0.5" fill="#111">714-32-2105</text>
<text class="S" x="1605.0" y="921.6" font-size="10.7" fill="#111">OMB No. 1545-0008</text>
<text class="S" x="1719.0" y="900.9" font-size="10.69" fill="#111" style="white-space:pre">This information is being furnished to the Internal Revenue Service.  If you are required</text>
<text class="S" x="1719.0" y="914.3" font-size="10.69" fill="#111">to file a tax return, a negligence penalty or other sanction may be imposed on you if</text>
<text class="S" x="1719.0" y="927.2" font-size="10.69" fill="#111">this income is taxable and you fail to report it.</text>
<text class="S" x="1088.0" y="941.8" font-size="10.7" font-weight="700" fill="#111">b</text>
<text class="S" x="1102.6" y="941.8" font-size="10.7" fill="#111">Employer identification number</text>
<text class="M" x="1131.5" y="964.5" font-size="19.5" stroke="#111" stroke-width="0.5" fill="#111">24-3188810</text>
<text class="S" x="1088.0" y="982.0" font-size="10.7" font-weight="700" fill="#111">c</text>
<text class="S" x="1102.6" y="982.0" font-size="10.7" fill="#111">Employer's name, address, and ZIP code</text>
<text class="M" transform="matrix(1,0,0,0.857,1131.5,1005.6)" font-size="19.5" font-weight="700" stroke="#111" stroke-width="0.3" fill="#111">Adams, Chase and Gilbert Inc</text>
<text class="M" transform="matrix(1,0,0,0.857,1131.5,1032.4)" font-size="19.5" font-weight="700" stroke="#111" stroke-width="0.3" fill="#111">972 Gonzalez Dam</text>
<text class="M" transform="matrix(1,0,0,0.857,1131.5,1059.2)" font-size="19.5" font-weight="700" stroke="#111" stroke-width="0.3" fill="#111">South Katherine</text>
<text class="M" transform="matrix(1,0,0,0.857,1340.5,1059.2)" font-size="19.5" font-weight="700" stroke="#111" stroke-width="0.3" fill="#111">NC</text>
<text class="M" transform="matrix(1,0,0,0.857,1400.3,1059.2)" font-size="19.5" font-weight="700" stroke="#111" stroke-width="0.3" fill="#111">95869-5178</text>
<text class="S" x="1088.0" y="1103.0" font-size="10.7" font-weight="700" fill="#111">d</text>
<text class="S" x="1102.6" y="1103.0" font-size="10.7" fill="#111">Control number</text>
<text class="M" x="1131.5" y="1125.0" font-size="19.5" stroke="#111" stroke-width="0.5" fill="#111">1173038</text>
<text class="S" x="1088.0" y="1143.5" font-size="10.7" font-weight="700" fill="#111">e</text>
<text class="S" x="1102.6" y="1143.5" font-size="10.7" fill="#111">Employee's first name and initial</text>
<text class="S" x="1316.4" y="1143.5" font-size="10.7" fill="#111">Last name</text>
<text class="M" transform="matrix(1,0,0,0.857,1132.0,1186.1)" font-size="21.6" font-weight="700" stroke="#111" stroke-width="0.3" fill="#111">Samantha</text>
<text class="M" transform="matrix(1,0,0,0.857,1274.0,1186.1)" font-size="21.6" font-weight="700" stroke="#111" stroke-width="0.3" fill="#111">Martinez</text>
<text class="M" transform="matrix(1,0,0,0.857,1132.0,1217.3)" font-size="21.6" font-weight="700" stroke="#111" stroke-width="0.3" fill="#111">387 Burton Fords Apt. 407</text>
<text class="M" transform="matrix(1,0,0,0.857,1132.0,1247.0)" font-size="21.6" font-weight="700" stroke="#111" stroke-width="0.3" fill="#111">Brandontown</text>
<text class="M" transform="matrix(1,0,0,0.857,1315.0,1247.0)" font-size="21.6" font-weight="700" stroke="#111" stroke-width="0.3" fill="#111">ID</text>
<text class="M" transform="matrix(1,0,0,0.857,1404.0,1247.0)" font-size="21.6" font-weight="700" stroke="#111" stroke-width="0.3" fill="#111">12359-6940</text>
<text class="S" x="1088.5" y="1332.9" font-size="10.7" font-weight="700" fill="#111">f</text>
<text class="S" x="1102.6" y="1332.9" font-size="10.7" fill="#111">Employee's address and ZIP code</text>
<text class="S" x="1658.5" y="941.8" font-size="10.7" font-weight="700" fill="#111">1</text>
<text class="S" x="1684.8" y="941.8" font-size="10.7" fill="#111">Wages, tips, other compensation</text>
<text class="M" x="1695.3" y="964.5" font-size="19.5" stroke="#111" stroke-width="0.5" fill="#111">56081.18</text>
<text class="S" x="1907.0" y="941.8" font-size="10.7" font-weight="700" fill="#111">2</text>
<text class="S" x="1933.4" y="941.8" font-size="10.7" fill="#111">Federal income tax withheld</text>
<text class="M" x="1918.8" y="964.5" font-size="19.5" stroke="#111" stroke-width="0.5" fill="#111">19127.2</text>
<text class="S" x="1658.5" y="982.0" font-size="10.7" font-weight="700" fill="#111">3</text>
<text class="S" x="1684.8" y="982.0" font-size="10.7" fill="#111">Social security wages</text>
<text class="M" x="1695.3" y="1004.9" font-size="19.5" stroke="#111" stroke-width="0.5" fill="#111">66584.46</text>
<text class="S" x="1907.0" y="982.0" font-size="10.7" font-weight="700" fill="#111">4</text>
<text class="S" x="1933.4" y="982.0" font-size="10.7" fill="#111">Social security tax withheld</text>
<text class="M" x="1918.8" y="1004.9" font-size="19.5" stroke="#111" stroke-width="0.5" fill="#111">5093.71</text>
<text class="S" x="1658.5" y="1022.2" font-size="10.7" font-weight="700" fill="#111">5</text>
<text class="S" x="1684.8" y="1022.2" font-size="10.7" fill="#111">Medicare wages and tips</text>
<text class="M" x="1695.3" y="1045.3" font-size="19.5" stroke="#111" stroke-width="0.5" fill="#111">45427.75</text>
<text class="S" x="1907.0" y="1022.2" font-size="10.7" font-weight="700" fill="#111">6</text>
<text class="S" x="1933.4" y="1022.2" font-size="10.7" fill="#111">Medicare tax withheld</text>
<text class="M" x="1972.8" y="1045.3" font-size="19.5" stroke="#111" stroke-width="0.5" fill="#111">1317.4</text>
<text class="S" x="1658.5" y="1062.4" font-size="10.7" font-weight="700" fill="#111">7</text>
<text class="S" x="1684.8" y="1062.4" font-size="10.7" fill="#111">Social security tips</text>
<text class="M" x="1695.3" y="1085.6" font-size="19.5" stroke="#111" stroke-width="0.5" fill="#111">66584.46</text>
<text class="S" x="1907.0" y="1062.4" font-size="10.7" font-weight="700" fill="#111">8</text>
<text class="S" x="1933.4" y="1062.4" font-size="10.7" fill="#111">Allocated tips</text>
<text class="M" x="1972.8" y="1085.6" font-size="19.5" stroke="#111" stroke-width="0.5" fill="#111">45427.75</text>
<text class="S" x="1658.5" y="1103.1" font-size="10.7" font-weight="700" fill="#111">9</text>
<text class="S" x="1684.8" y="1103.1" font-size="10.7" fill="#111">Advance EIC payment</text>
<text class="S" x="1900.5" y="1103.1" font-size="10.7" font-weight="700" fill="#111">10</text>
<text class="S" x="1933.4" y="1103.1" font-size="10.7" fill="#111">Dependent care benefits</text>
<text class="M" x="1972.8" y="1125.0" font-size="19.5" stroke="#111" stroke-width="0.5" fill="#111">139</text>
<text class="S" x="1652.4" y="1143.3" font-size="10.7" font-weight="700" fill="#111">11</text>
<text class="S" x="1684.7" y="1143.3" font-size="10.7" fill="#111">Nonqualified plans</text>
<text class="M" x="1695.0" y="1172.0" font-size="19.5" stroke="#111" stroke-width="0.5" fill="#111">102</text>
<text class="S" x="1652.0" y="1188.7" font-size="10.7" font-weight="700" fill="#111">13</text>
<text class="S" x="1668.5" y="1188.7" font-size="8.8" fill="#111">Statutory</text>
<text class="S" x="1668.5" y="1199.6" font-size="8.8" fill="#111">employee</text>
<text class="S" x="1743.5" y="1188.7" font-size="8.8" fill="#111">Retirement</text>
<text class="S" x="1743.5" y="1199.6" font-size="8.8" fill="#111">plan</text>
<text class="S" x="1817.6" y="1188.7" font-size="8.8" fill="#111">Third-party</text>
<text class="S" x="1817.6" y="1199.6" font-size="8.8" fill="#111">sick pay</text>
<text class="S" x="1652.0" y="1236.8" font-size="10.7" font-weight="700" fill="#111">14</text>
<text class="S" x="1684.7" y="1236.8" font-size="10.7" fill="#111">Other (see enclosed Notice to Employee)</text>
<text class="S" x="1901.8" y="1143.3" font-size="10.7" font-weight="700" fill="#111">12a</text>
<text class="S" x="1934.3" y="1143.3" font-size="10.7" font-weight="700" fill="#111">See instructions for box 12</text>
<text class="M" transform="matrix(1,0,0,0.857,1936.0,1172.0)" font-size="19.5" font-weight="700" stroke="#111" stroke-width="0.3" fill="#111">E</text>
<text class="M" x="1973.2" y="1172.0" font-size="19.5" stroke="#111" stroke-width="0.5" fill="#111">5914</text>
<text class="S" x="1901.8" y="1189.8" font-size="10.7" font-weight="700" fill="#111">12b</text>
<text class="M" transform="matrix(1,0,0,0.857,1936.0,1217.0)" font-size="19.5" font-weight="700" stroke="#111" stroke-width="0.3" fill="#111">D</text>
<text class="M" x="1973.2" y="1217.0" font-size="19.5" stroke="#111" stroke-width="0.5" fill="#111">831</text>
<text class="S" x="1901.8" y="1236.8" font-size="10.7" font-weight="700" fill="#111">12c</text>
<text class="M" transform="matrix(1,0,0,0.857,1936.0,1266.5)" font-size="19.5" font-weight="700" stroke="#111" stroke-width="0.3" fill="#111">G</text>
<text class="M" x="1973.2" y="1266.5" font-size="19.5" stroke="#111" stroke-width="0.5" fill="#111">316</text>
<text class="S" x="1901.8" y="1283.5" font-size="10.7" font-weight="700" fill="#111">12d</text>
<text class="M" transform="matrix(1,0,0,0.857,1936.0,1312.3)" font-size="19.5" font-weight="700" stroke="#111" stroke-width="0.3" fill="#111">E</text>
<text class="M" x="1973.2" y="1312.3" font-size="19.5" stroke="#111" stroke-width="0.5" fill="#111">661</text>
<text class="S" x="1082.7" y="1347.1" font-size="10.7" font-weight="700" fill="#111">15</text>
<text class="S" x="1102.4" y="1347.1" font-size="10.7" fill="#111">State</text>
<text class="S" x="1152.5" y="1347.1" font-size="10.7" fill="#111">Employer's state ID number</text>
<text class="S" x="1374.6" y="1347.1" font-size="10.7" fill="#111">16</text>
<text class="S" x="1392.0" y="1347.1" font-size="10.7" fill="#111">State wages, tips, etc.</text>
<text class="S" x="1538.0" y="1347.1" font-size="10.7" fill="#111">17</text>
<text class="S" x="1555.8" y="1347.1" font-size="10.7" fill="#111">State income tax</text>
<text class="S" x="1697.5" y="1347.1" font-size="10.7" fill="#111">18</text>
<text class="S" x="1714.4" y="1347.1" font-size="10.7" fill="#111">Local wages, tips, etc.</text>
<text class="S" x="1871.4" y="1347.1" font-size="10.7" fill="#111">19</text>
<text class="S" x="1888.4" y="1347.1" font-size="10.7" fill="#111">Local income tax</text>
<text class="S" x="2030.0" y="1347.1" font-size="10.7" fill="#111">20</text>
<text class="S" x="2047.8" y="1347.1" font-size="10.7" fill="#111">Locality name</text>
<text class="M" transform="matrix(1,0,0,0.857,1092.5,1369.5)" font-size="19.5" font-weight="700" stroke="#111" stroke-width="0.3" fill="#111">WV</text>
<text class="M" x="1191.3" y="1369.5" font-size="19.5" stroke="#111" stroke-width="0.5" fill="#111">643-86-468</text>
<text class="M" x="1371.5" y="1369.5" font-size="19.5" stroke="#111" stroke-width="0.5" fill="#111">27219.05</text>
<text class="M" x="1535.6" y="1369.5" font-size="19.5" stroke="#111" stroke-width="0.5" fill="#111">1517.1</text>
<text class="M" x="1695.5" y="1369.5" font-size="19.5" stroke="#111" stroke-width="0.5" fill="#111">69617.91</text>
<text class="M" x="1868.8" y="1369.5" font-size="19.5" stroke="#111" stroke-width="0.5" fill="#111">7935.37</text>
<text class="M" transform="matrix(1,0,0,0.857,2028.3,1370.2)" font-size="11.3" font-weight="700" stroke="#111" stroke-width="0.3" fill="#111">Dominic Heights</text>
<text class="M" transform="matrix(1,0,0,0.857,1092.5,1409.5)" font-size="19.5" font-weight="700" stroke="#111" stroke-width="0.3" fill="#111">NJ</text>
<text class="M" x="1191.3" y="1409.5" font-size="19.5" stroke="#111" stroke-width="0.5" fill="#111">401-25-455</text>
<text class="M" x="1371.5" y="1409.5" font-size="19.5" stroke="#111" stroke-width="0.5" fill="#111">30829.36</text>
<text class="M" x="1535.6" y="1409.5" font-size="19.5" stroke="#111" stroke-width="0.5" fill="#111">1443.46</text>
<text class="M" x="1695.5" y="1409.5" font-size="19.5" stroke="#111" stroke-width="0.5" fill="#111">53793.26</text>
<text class="M" x="1868.8" y="1409.5" font-size="19.5" stroke="#111" stroke-width="0.5" fill="#111">11216.09</text>
<text class="M" transform="matrix(1,0,0,0.857,2028.3,1410.2)" font-size="14.4" font-weight="700" stroke="#111" stroke-width="0.3" fill="#111">Robles Mount</text>
<text class="S" x="1196.0" y="1435.8" font-size="19.5" font-weight="700" fill="#111">Wage and Tax</text>
<text class="S" x="1196.0" y="1460.5" font-size="19.5" font-weight="700" fill="#111">Statement</text>
<text class="S" x="1081.0" y="1459.8" font-size="11.8" font-weight="700" fill="#111" style="white-space:pre">Form  W-2</text>
<g transform="translate(0,694)" fill="none" stroke="#111" stroke-width="4.1" stroke-linecap="round" stroke-linejoin="round"><path d="M1548.3,733 H1563 Q1566,733 1566,736 V744.6 Q1566,747.6 1563,747.6 H1551.3 Q1548.4,747.6 1548.4,750.6 V762.7 H1566"/><path d="M1583,733 H1594.1 Q1597.1,733 1597.1,736 V759.7 Q1597.1,762.7 1594.1,762.7 H1583 Q1580,762.7 1580,759.7 V736 Q1580,733 1583,733 Z"/><path d="M1610.8,733 H1620 V762.7 M1610.8,762.7 H1628.5 V751.5" /><path d="M1645.3,733 H1657.1 Q1660.1,733 1660.1,736 V759.7 Q1660.1,762.7 1657.1,762.7 H1645.3 Q1642.3,762.7 1642.3,759.7 V736 Q1642.3,733 1645.3,733 Z"/></g>
<text class="S" x="1820.4" y="1437.0" font-size="12.9" fill="#111">Department of the Treasury--Internal Revenue Service</text>
<text class="S" x="1081.0" y="1478.8" font-size="14.05" font-weight="700" fill="#111">Copy C For EMPLOYEE'S RECORDS.</text>
<text class="S" x="1081.0" y="1495.6" font-size="14.05" font-weight="700" fill="#111">(See enclosed Notice to Employee.)</text>
<text class="S" x="1868.5" y="1457.7" font-size="12.75" font-weight="700" fill="#111">Safe, accurate,</text>
<text class="S" x="1868.5" y="1474.6" font-size="12.75" font-weight="700" fill="#111" style="white-space:pre">FAST!  Use</text>
<g transform="translate(2030.0,1462.8) scale(0.972,0.956)"><ellipse cx="0" cy="0" rx="59" ry="13.7" fill="#1a1a1a"/><text class="S" transform="matrix(1.15,0,0,1,-55,1)" font-size="10.2" font-weight="700" font-style="italic" fill="#fff" stroke="#fff" stroke-width="0.4">IRS</text><text class="S" transform="matrix(1.22,0,0,1,-41.5,8.6)" font-size="29.5" font-weight="700" font-style="italic" fill="#fff" stroke="#fff" stroke-width="0.9">e</text><path d="M-20.5,3 L-6.5,-2.6 L-7.8,0.2 L4.5,-4.6 L-10.5,4.6 L-8.9,1.6 Z" fill="#fff"/><text class="S" transform="matrix(1.2,0,0,1,1.7,8.3)" font-size="23.7" font-weight="700" font-style="italic" fill="#fff" stroke="#fff" stroke-width="0.8" letter-spacing="0.4">file</text></g>
</svg>
<!-- thumbnails -->
<div class="a" style="left:2208px;top:100px;width:240px;height:1473px;background:#fff"></div>
<div class="a" style="left:2448px;top:0;width:2px;height:1573px;background:#dedede"></div>
<div class="a" style="left:2462px;top:2px;width:12px;height:1571px;background:#cbcbcb;border-left:1.5px solid #b0b0b0;box-sizing:border-box"></div>
<div class="a" style="left:2216px;top:108px;width:216px;height:248px;background:#c5d5f5;border-radius:11px 0 0 11px"></div>
<div class="a" style="left:2256px;top:120px;width:136px;height:192px;background:#4a75dc"></div>
<div class="a" style="left:2260px;top:124px;width:128px;height:184px;background:#fff;overflow:hidden">
  <svg width="128" height="184" viewBox="1036 116 1142 1478" preserveAspectRatio="xMidYMid slice" style="display:block">
  <g><line x1="1077.5" y1="195.3" x2="1848.5" y2="195.3" stroke="#000" stroke-width="1.7"/>
<line x1="1967.0" y1="195.3" x2="2134.3" y2="195.3" stroke="#000" stroke-width="1.7"/>
<line x1="1078.3" y1="194.5" x2="1078.3" y2="722.8" stroke="#000" stroke-width="1.7"/>
<line x1="2133.5" y1="194.5" x2="2133.5" y2="722.8" stroke="#000" stroke-width="1.7"/>
<line x1="1078.3" y1="235.5" x2="2133.5" y2="235.5" stroke="#000" stroke-width="1.7"/>
<line x1="1259.5" y1="195.3" x2="1259.5" y2="235.5" stroke="#000" stroke-width="1.7"/>
<line x1="1587.5" y1="195.3" x2="1587.5" y2="235.5" stroke="#000" stroke-width="1.7"/>
<line x1="1078.3" y1="276.5" x2="2133.5" y2="276.5" stroke="#000" stroke-width="1.7"/>
<line x1="1078.3" y1="397.5" x2="2133.5" y2="397.5" stroke="#000" stroke-width="1.7"/>
<line x1="1078.3" y1="438.3" x2="2133.5" y2="438.3" stroke="#000" stroke-width="1.7"/>
<line x1="1078.3" y1="641.5" x2="2133.5" y2="641.5" stroke="#000" stroke-width="1.7"/>
<line x1="1078.3" y1="722.0" x2="2133.5" y2="722.0" stroke="#000" stroke-width="1.7"/>
<line x1="1641.5" y1="317.2" x2="2133.5" y2="317.2" stroke="#000" stroke-width="1.7"/>
<line x1="1641.5" y1="357.4" x2="2133.5" y2="357.4" stroke="#000" stroke-width="1.7"/>
<line x1="1641.5" y1="485.0" x2="2133.5" y2="485.0" stroke="#000" stroke-width="1.7"/>
<line x1="1641.5" y1="532.6" x2="2133.5" y2="532.6" stroke="#000" stroke-width="1.7"/>
<line x1="1890.7" y1="578.6" x2="2133.5" y2="578.6" stroke="#000" stroke-width="1.7"/>
<line x1="1890.7" y1="625.1" x2="2133.5" y2="625.1" stroke="#000" stroke-width="1.7"/>
<line x1="1641.5" y1="235.5" x2="1641.5" y2="641.5" stroke="#000" stroke-width="1.7"/>
<line x1="1890.7" y1="235.5" x2="1890.7" y2="641.5" stroke="#000" stroke-width="1.7"/>
<line x1="1970.0" y1="452.0" x2="1970.0" y2="485.0" stroke="#000" stroke-width="1.5"/>
<line x1="1970.0" y1="498.0" x2="1970.0" y2="532.6" stroke="#000" stroke-width="1.5"/>
<line x1="1970.0" y1="545.7" x2="1970.0" y2="578.6" stroke="#000" stroke-width="1.5"/>
<line x1="1970.0" y1="592.2" x2="1970.0" y2="625.1" stroke="#000" stroke-width="1.5"/>
<line x1="1128.5" y1="641.5" x2="1128.5" y2="722.0" stroke="#000" stroke-width="1.7"/>
<line x1="1368.1" y1="641.5" x2="1368.1" y2="722.0" stroke="#000" stroke-width="1.7"/>
<line x1="1532.7" y1="641.5" x2="1532.7" y2="722.0" stroke="#000" stroke-width="1.7"/>
<line x1="1691.3" y1="641.5" x2="1691.3" y2="722.0" stroke="#000" stroke-width="1.7"/>
<line x1="1865.5" y1="641.5" x2="1865.5" y2="722.0" stroke="#000" stroke-width="1.7"/>
<line x1="2024.7" y1="641.5" x2="2024.7" y2="722.0" stroke="#000" stroke-width="1.7"/>
<line x1="1078.3" y1="682.0" x2="2133.5" y2="682.0" stroke="#000" stroke-width="1.4" stroke-dasharray="2.5 1.5"/>
<rect x="1641.5" y="235.5" width="249.2" height="41.0" fill="none" stroke="#000" stroke-width="3.0"/>
<rect x="1890.7" y="235.5" width="242.8" height="41.0" fill="none" stroke="#000" stroke-width="3.0"/>
<rect x="1641.5" y="397.5" width="249.2" height="40.8" fill="none" stroke="#000" stroke-width="3.0"/>
<rect x="1666.5" y="507.6" width="25.3" height="22.7" fill="none" stroke="#000" stroke-width="1.5"/>
<rect x="1741.4" y="507.6" width="25.3" height="22.7" fill="none" stroke="#000" stroke-width="1.5"/>
<rect x="1815.8" y="507.6" width="25.3" height="22.7" fill="none" stroke="#000" stroke-width="1.5"/>
<text class="S" x="1168.5" y="210.5" font-size="17.4" font-weight="700" text-anchor="middle" fill="#111">REISSUED</text>
<text class="S" x="1168.5" y="232.0" font-size="17.4" font-weight="700" text-anchor="middle" fill="#111">STATEMENT</text>
<text class="S" x="1262.0" y="207.0" font-size="10.7" font-weight="700" fill="#111">a</text>
<text class="S" x="1277.0" y="207.0" font-size="10.7" font-weight="700" fill="#111">Employee's social security number</text>
<text class="M" x="1345.0" y="228.7" font-size="19.5" stroke="#111" stroke-width="0.5" fill="#111">714-32-2105</text>
<text class="S" x="1605.0" y="226.8" font-size="10.7" fill="#111">OMB No. 1545-0008</text>
<text class="S" x="1744.0" y="206.3" font-size="12.9" font-weight="700" fill="#111">Safe, Accurate,</text>
<text class="S" x="1744.0" y="226.3" font-size="12.9" font-weight="700" fill="#111" style="white-space:pre">FAST!  Use</text>
<g transform="translate(1907.8,215.7) scale(1.000,1.000)"><ellipse cx="0" cy="0" rx="59" ry="13.7" fill="#1a1a1a"/><text class="S" transform="matrix(1.15,0,0,1,-55,1)" font-size="10.2" font-weight="700" font-style="italic" fill="#fff" stroke="#fff" stroke-width="0.4">IRS</text><text class="S" transform="matrix(1.22,0,0,1,-41.5,8.6)" font-size="29.5" font-weight="700" font-style="italic" fill="#fff" stroke="#fff" stroke-width="0.9">e</text><path d="M-20.5,3 L-6.5,-2.6 L-7.8,0.2 L4.5,-4.6 L-10.5,4.6 L-8.9,1.6 Z" fill="#fff"/><text class="S" transform="matrix(1.2,0,0,1,1.7,8.3)" font-size="23.7" font-weight="700" font-style="italic" fill="#fff" stroke="#fff" stroke-width="0.8" letter-spacing="0.4">file</text></g>
<text class="S" x="1972.0" y="207.3" font-size="13" fill="#111">Visit the IRS Website</text>
<text class="S" x="1972.0" y="226.8" font-size="13" fill="#111">at www.irs.gov/efile.</text>
<text class="S" x="1088.0" y="247.0" font-size="10.7" font-weight="700" fill="#111">b</text>
<text class="S" x="1102.6" y="247.0" font-size="10.7" fill="#111">Employer identification number</text>
<text class="M" x="1131.5" y="269.0" font-size="19.5" stroke="#111" stroke-width="0.5" fill="#111">24-3188810</text>
<text class="S" x="1088.0" y="288.0" font-size="10.7" font-weight="700" fill="#111">c</text>
<text class="S" x="1102.6" y="288.0" font-size="10.7" fill="#111">Employer's name, address, and ZIP code</text>
<text class="M" transform="matrix(1,0,0,0.857,1131.5,311.6)" font-size="19.5" font-weight="700" stroke="#111" stroke-width="0.3" fill="#111">Adams, Chase and Gilbert Inc</text>
<text class="M" transform="matrix(1,0,0,0.857,1131.5,338.4)" font-size="19.5" font-weight="700" stroke="#111" stroke-width="0.3" fill="#111">972 Gonzalez Dam</text>
<text class="M" transform="matrix(1,0,0,0.857,1131.5,365.2)" font-size="19.5" font-weight="700" stroke="#111" stroke-width="0.3" fill="#111">South Katherine</text>
<text class="M" transform="matrix(1,0,0,0.857,1340.5,365.2)" font-size="19.5" font-weight="700" stroke="#111" stroke-width="0.3" fill="#111">NC</text>
<text class="M" transform="matrix(1,0,0,0.857,1400.3,365.2)" font-size="19.5" font-weight="700" stroke="#111" stroke-width="0.3" fill="#111">95869-5178</text>
<text class="S" x="1088.0" y="409.0" font-size="10.7" font-weight="700" fill="#111">d</text>
<text class="S" x="1102.6" y="409.0" font-size="10.7" fill="#111">Control number</text>
<text class="M" x="1131.5" y="431.0" font-size="19.5" stroke="#111" stroke-width="0.5" fill="#111">1173038</text>
<text class="S" x="1088.0" y="449.5" font-size="10.7" font-weight="700" fill="#111">e</text>
<text class="S" x="1102.6" y="449.5" font-size="10.7" fill="#111">Employee's first name and initial</text>
<text class="S" x="1316.4" y="449.5" font-size="10.7" fill="#111">Last name</text>
<text class="M" transform="matrix(1,0,0,0.857,1132.0,492.1)" font-size="21.6" font-weight="700" stroke="#111" stroke-width="0.3" fill="#111">Samantha</text>
<text class="M" transform="matrix(1,0,0,0.857,1274.0,492.1)" font-size="21.6" font-weight="700" stroke="#111" stroke-width="0.3" fill="#111">Martinez</text>
<text class="M" transform="matrix(1,0,0,0.857,1132.0,523.3)" font-size="21.6" font-weight="700" stroke="#111" stroke-width="0.3" fill="#111">387 Burton Fords Apt. 407</text>
<text class="M" transform="matrix(1,0,0,0.857,1132.0,553.0)" font-size="21.6" font-weight="700" stroke="#111" stroke-width="0.3" fill="#111">Brandontown</text>
<text class="M" transform="matrix(1,0,0,0.857,1315.0,553.0)" font-size="21.6" font-weight="700" stroke="#111" stroke-width="0.3" fill="#111">ID</text>
<text class="M" transform="matrix(1,0,0,0.857,1404.0,553.0)" font-size="21.6" font-weight="700" stroke="#111" stroke-width="0.3" fill="#111">12359-6940</text>
<text class="S" x="1088.5" y="638.9" font-size="10.7" font-weight="700" fill="#111">f</text>
<text class="S" x="1102.6" y="638.9" font-size="10.7" fill="#111">Employee's address and ZIP code</text>
<text class="S" x="1658.5" y="247.0" font-size="10.7" font-weight="700" fill="#111">1</text>
<text class="S" x="1684.8" y="247.0" font-size="10.7" fill="#111">Wages, tips, other compensation</text>
<text class="M" x="1695.3" y="269.0" font-size="19.5" stroke="#111" stroke-width="0.5" fill="#111">56081.18</text>
<text class="S" x="1907.0" y="247.0" font-size="10.7" font-weight="700" fill="#111">2</text>
<text class="S" x="1933.4" y="247.0" font-size="10.7" fill="#111">Federal income tax withheld</text>
<text class="M" x="1918.8" y="269.0" font-size="19.5" stroke="#111" stroke-width="0.5" fill="#111">19127.2</text>
<text class="S" x="1658.5" y="288.0" font-size="10.7" font-weight="700" fill="#111">3</text>
<text class="S" x="1684.8" y="288.0" font-size="10.7" fill="#111">Social security wages</text>
<text class="M" x="1695.3" y="310.9" font-size="19.5" stroke="#111" stroke-width="0.5" fill="#111">66584.46</text>
<text class="S" x="1907.0" y="288.0" font-size="10.7" font-weight="700" fill="#111">4</text>
<text class="S" x="1933.4" y="288.0" font-size="10.7" fill="#111">Social security tax withheld</text>
<text class="M" x="1918.8" y="310.9" font-size="19.5" stroke="#111" stroke-width="0.5" fill="#111">5093.71</text>
<text class="S" x="1658.5" y="328.2" font-size="10.7" font-weight="700" fill="#111">5</text>
<text class="S" x="1684.8" y="328.2" font-size="10.7" fill="#111">Medicare wages and tips</text>
<text class="M" x="1695.3" y="351.3" font-size="19.5" stroke="#111" stroke-width="0.5" fill="#111">45427.75</text>
<text class="S" x="1907.0" y="328.2" font-size="10.7" font-weight="700" fill="#111">6</text>
<text class="S" x="1933.4" y="328.2" font-size="10.7" fill="#111">Medicare tax withheld</text>
<text class="M" x="1972.8" y="351.3" font-size="19.5" stroke="#111" stroke-width="0.5" fill="#111">1317.4</text>
<text class="S" x="1658.5" y="368.4" font-size="10.7" font-weight="700" fill="#111">7</text>
<text class="S" x="1684.8" y="368.4" font-size="10.7" fill="#111">Social security tips</text>
<text class="M" x="1695.3" y="391.6" font-size="19.5" stroke="#111" stroke-width="0.5" fill="#111">66584.46</text>
<text class="S" x="1907.0" y="368.4" font-size="10.7" font-weight="700" fill="#111">8</text>
<text class="S" x="1933.4" y="368.4" font-size="10.7" fill="#111">Allocated tips</text>
<text class="M" x="1972.8" y="391.6" font-size="19.5" stroke="#111" stroke-width="0.5" fill="#111">45427.75</text>
<text class="S" x="1658.5" y="409.1" font-size="10.7" font-weight="700" fill="#111">9</text>
<text class="S" x="1684.8" y="409.1" font-size="10.7" fill="#111">Advance EIC payment</text>
<text class="S" x="1900.5" y="409.1" font-size="10.7" font-weight="700" fill="#111">10</text>
<text class="S" x="1933.4" y="409.1" font-size="10.7" fill="#111">Dependent care benefits</text>
<text class="M" x="1972.8" y="431.0" font-size="19.5" stroke="#111" stroke-width="0.5" fill="#111">139</text>
<text class="S" x="1652.4" y="449.3" font-size="10.7" font-weight="700" fill="#111">11</text>
<text class="S" x="1684.7" y="449.3" font-size="10.7" fill="#111">Nonqualified plans</text>
<text class="M" x="1695.0" y="478.0" font-size="19.5" stroke="#111" stroke-width="0.5" fill="#111">102</text>
<text class="S" x="1652.0" y="494.7" font-size="10.7" font-weight="700" fill="#111">13</text>
<text class="S" x="1668.5" y="494.7" font-size="8.8" fill="#111">Statutory</text>
<text class="S" x="1668.5" y="505.6" font-size="8.8" fill="#111">employee</text>
<text class="S" x="1743.5" y="494.7" font-size="8.8" fill="#111">Retirement</text>
<text class="S" x="1743.5" y="505.6" font-size="8.8" fill="#111">plan</text>
<text class="S" x="1817.6" y="494.7" font-size="8.8" fill="#111">Third-party</text>
<text class="S" x="1817.6" y="505.6" font-size="8.8" fill="#111">sick pay</text>
<text class="S" x="1652.0" y="542.8" font-size="10.7" font-weight="700" fill="#111">14</text>
<text class="S" x="1684.7" y="542.8" font-size="10.7" fill="#111">Other (see enclosed Notice to Employee)</text>
<text class="S" x="1901.8" y="449.3" font-size="10.7" font-weight="700" fill="#111">12a</text>
<text class="S" x="1934.3" y="449.3" font-size="10.7" font-weight="700" fill="#111">See instructions for box 12</text>
<text class="M" transform="matrix(1,0,0,0.857,1936.0,478.0)" font-size="19.5" font-weight="700" stroke="#111" stroke-width="0.3" fill="#111">E</text>
<text class="M" x="1973.2" y="478.0" font-size="19.5" stroke="#111" stroke-width="0.5" fill="#111">5914</text>
<text class="S" x="1901.8" y="495.8" font-size="10.7" font-weight="700" fill="#111">12b</text>
<text class="M" transform="matrix(1,0,0,0.857,1936.0,523.0)" font-size="19.5" font-weight="700" stroke="#111" stroke-width="0.3" fill="#111">D</text>
<text class="M" x="1973.2" y="523.0" font-size="19.5" stroke="#111" stroke-width="0.5" fill="#111">831</text>
<text class="S" x="1901.8" y="542.8" font-size="10.7" font-weight="700" fill="#111">12c</text>
<text class="M" transform="matrix(1,0,0,0.857,1936.0,572.5)" font-size="19.5" font-weight="700" stroke="#111" stroke-width="0.3" fill="#111">G</text>
<text class="M" x="1973.2" y="572.5" font-size="19.5" stroke="#111" stroke-width="0.5" fill="#111">316</text>
<text class="S" x="1901.8" y="589.5" font-size="10.7" font-weight="700" fill="#111">12d</text>
<text class="M" transform="matrix(1,0,0,0.857,1936.0,618.3)" font-size="19.5" font-weight="700" stroke="#111" stroke-width="0.3" fill="#111">E</text>
<text class="M" x="1973.2" y="618.3" font-size="19.5" stroke="#111" stroke-width="0.5" fill="#111">661</text>
<text class="S" x="1082.7" y="653.1" font-size="10.7" font-weight="700" fill="#111">15</text>
<text class="S" x="1102.4" y="653.1" font-size="10.7" fill="#111">State</text>
<text class="S" x="1152.5" y="653.1" font-size="10.7" fill="#111">Employer's state ID number</text>
<text class="S" x="1374.6" y="653.1" font-size="10.7" fill="#111">16</text>
<text class="S" x="1392.0" y="653.1" font-size="10.7" fill="#111">State wages, tips, etc.</text>
<text class="S" x="1538.0" y="653.1" font-size="10.7" fill="#111">17</text>
<text class="S" x="1555.8" y="653.1" font-size="10.7" fill="#111">State income tax</text>
<text class="S" x="1697.5" y="653.1" font-size="10.7" fill="#111">18</text>
<text class="S" x="1714.4" y="653.1" font-size="10.7" fill="#111">Local wages, tips, etc.</text>
<text class="S" x="1871.4" y="653.1" font-size="10.7" fill="#111">19</text>
<text class="S" x="1888.4" y="653.1" font-size="10.7" fill="#111">Local income tax</text>
<text class="S" x="2030.0" y="653.1" font-size="10.7" fill="#111">20</text>
<text class="S" x="2047.8" y="653.1" font-size="10.7" fill="#111">Locality name</text>
<text class="M" transform="matrix(1,0,0,0.857,1092.5,675.5)" font-size="19.5" font-weight="700" stroke="#111" stroke-width="0.3" fill="#111">WV</text>
<text class="M" x="1191.3" y="675.5" font-size="19.5" stroke="#111" stroke-width="0.5" fill="#111">643-86-468</text>
<text class="M" x="1371.5" y="675.5" font-size="19.5" stroke="#111" stroke-width="0.5" fill="#111">27219.05</text>
<text class="M" x="1535.6" y="675.5" font-size="19.5" stroke="#111" stroke-width="0.5" fill="#111">1517.1</text>
<text class="M" x="1695.5" y="675.5" font-size="19.5" stroke="#111" stroke-width="0.5" fill="#111">69617.91</text>
<text class="M" x="1868.8" y="675.5" font-size="19.5" stroke="#111" stroke-width="0.5" fill="#111">7935.37</text>
<text class="M" transform="matrix(1,0,0,0.857,2028.3,676.2)" font-size="11.3" font-weight="700" stroke="#111" stroke-width="0.3" fill="#111">Dominic Heights</text>
<text class="M" transform="matrix(1,0,0,0.857,1092.5,715.5)" font-size="19.5" font-weight="700" stroke="#111" stroke-width="0.3" fill="#111">NJ</text>
<text class="M" x="1191.3" y="715.5" font-size="19.5" stroke="#111" stroke-width="0.5" fill="#111">401-25-455</text>
<text class="M" x="1371.5" y="715.5" font-size="19.5" stroke="#111" stroke-width="0.5" fill="#111">30829.36</text>
<text class="M" x="1535.6" y="715.5" font-size="19.5" stroke="#111" stroke-width="0.5" fill="#111">1443.46</text>
<text class="M" x="1695.5" y="715.5" font-size="19.5" stroke="#111" stroke-width="0.5" fill="#111">53793.26</text>
<text class="M" x="1868.8" y="715.5" font-size="19.5" stroke="#111" stroke-width="0.5" fill="#111">11216.09</text>
<text class="M" transform="matrix(1,0,0,0.857,2028.3,716.2)" font-size="14.4" font-weight="700" stroke="#111" stroke-width="0.3" fill="#111">Robles Mount</text>
<text class="S" x="1196.0" y="742.8" font-size="19.5" font-weight="700" fill="#111">Wage and Tax</text>
<text class="S" x="1196.0" y="767.5" font-size="19.5" font-weight="700" fill="#111">Statement</text>
<text class="S" x="1081.0" y="768.7" font-size="11.8" font-weight="700" fill="#111" style="white-space:pre">Form  W-2</text>
<g transform="translate(0,0)" fill="none" stroke="#111" stroke-width="4.1" stroke-linecap="round" stroke-linejoin="round"><path d="M1548.3,733 H1563 Q1566,733 1566,736 V744.6 Q1566,747.6 1563,747.6 H1551.3 Q1548.4,747.6 1548.4,750.6 V762.7 H1566"/><path d="M1583,733 H1594.1 Q1597.1,733 1597.1,736 V759.7 Q1597.1,762.7 1594.1,762.7 H1583 Q1580,762.7 1580,759.7 V736 Q1580,733 1583,733 Z"/><path d="M1610.8,733 H1620 V762.7 M1610.8,762.7 H1628.5 V751.5" /><path d="M1645.3,733 H1657.1 Q1660.1,733 1660.1,736 V759.7 Q1660.1,762.7 1657.1,762.7 H1645.3 Q1642.3,762.7 1642.3,759.7 V736 Q1642.3,733 1645.3,733 Z"/></g>
<text class="S" x="1820.4" y="743.0" font-size="12.9" fill="#111">Department of the Treasury--Internal Revenue Service</text>
<text class="S" x="1081.0" y="787.8" font-size="14.1" font-weight="700" fill="#111">Copy B--To Be Filed with Employee's FEDERAL Tax Return</text>
<text class="S" x="1081.0" y="805.0" font-size="14.15" fill="#111">This information is being furnished to the Internal Revenue Service.</text>
<line x1="1080.0" y1="850.0" x2="2134.5" y2="850.0" stroke="#6e6e6e" stroke-width="2.4" stroke-dasharray="9.4 3.15"/>
<text class="S" x="1486.0" y="860.3" font-size="11.67" fill="#111" style="white-space:pre">Cut here.  Keep lower portion for your records.</text>
<line x1="1077.5" y1="891.2" x2="2134.3" y2="891.2" stroke="#000" stroke-width="1.7"/>
<line x1="1078.3" y1="890.4" x2="1078.3" y2="1418.0" stroke="#000" stroke-width="1.7"/>
<line x1="2133.5" y1="890.4" x2="2133.5" y2="1418.0" stroke="#000" stroke-width="1.7"/>
<line x1="1078.3" y1="930.4" x2="2133.5" y2="930.4" stroke="#000" stroke-width="1.7"/>
<line x1="1259.5" y1="891.2" x2="1259.5" y2="930.4" stroke="#000" stroke-width="1.7"/>
<line x1="1587.5" y1="891.2" x2="1587.5" y2="930.4" stroke="#000" stroke-width="1.7"/>
<line x1="1078.3" y1="970.5" x2="2133.5" y2="970.5" stroke="#000" stroke-width="1.7"/>
<line x1="1078.3" y1="1091.5" x2="2133.5" y2="1091.5" stroke="#000" stroke-width="1.7"/>
<line x1="1078.3" y1="1132.3" x2="2133.5" y2="1132.3" stroke="#000" stroke-width="1.7"/>
<line x1="1078.3" y1="1335.5" x2="2133.5" y2="1335.5" stroke="#000" stroke-width="1.7"/>
<line x1="1078.3" y1="1417.2" x2="2133.5" y2="1417.2" stroke="#000" stroke-width="1.7"/>
<line x1="1641.5" y1="1011.2" x2="2133.5" y2="1011.2" stroke="#000" stroke-width="1.7"/>
<line x1="1641.5" y1="1051.4" x2="2133.5" y2="1051.4" stroke="#000" stroke-width="1.7"/>
<line x1="1641.5" y1="1179.0" x2="2133.5" y2="1179.0" stroke="#000" stroke-width="1.7"/>
<line x1="1641.5" y1="1226.6" x2="2133.5" y2="1226.6" stroke="#000" stroke-width="1.7"/>
<line x1="1890.7" y1="1272.6" x2="2133.5" y2="1272.6" stroke="#000" stroke-width="1.7"/>
<line x1="1890.7" y1="1319.1" x2="2133.5" y2="1319.1" stroke="#000" stroke-width="1.7"/>
<line x1="1641.5" y1="930.4" x2="1641.5" y2="1335.5" stroke="#000" stroke-width="1.7"/>
<line x1="1890.7" y1="930.4" x2="1890.7" y2="1335.5" stroke="#000" stroke-width="1.7"/>
<line x1="1970.0" y1="1146.0" x2="1970.0" y2="1179.0" stroke="#000" stroke-width="1.5"/>
<line x1="1970.0" y1="1192.0" x2="1970.0" y2="1226.6" stroke="#000" stroke-width="1.5"/>
<line x1="1970.0" y1="1239.7" x2="1970.0" y2="1272.6" stroke="#000" stroke-width="1.5"/>
<line x1="1970.0" y1="1286.2" x2="1970.0" y2="1319.1" stroke="#000" stroke-width="1.5"/>
<line x1="1128.5" y1="1335.5" x2="1128.5" y2="1417.2" stroke="#000" stroke-width="1.7"/>
<line x1="1368.1" y1="1335.5" x2="1368.1" y2="1417.2" stroke="#000" stroke-width="1.7"/>
<line x1="1532.7" y1="1335.5" x2="1532.7" y2="1417.2" stroke="#000" stroke-width="1.7"/>
<line x1="1691.3" y1="1335.5" x2="1691.3" y2="1417.2" stroke="#000" stroke-width="1.7"/>
<line x1="1865.5" y1="1335.5" x2="1865.5" y2="1417.2" stroke="#000" stroke-width="1.7"/>
<line x1="2024.7" y1="1335.5" x2="2024.7" y2="1417.2" stroke="#000" stroke-width="1.7"/>
<line x1="1078.3" y1="1376.0" x2="2133.5" y2="1376.0" stroke="#000" stroke-width="1.4" stroke-dasharray="2.5 1.5"/>
<rect x="1666.5" y="1201.6" width="25.3" height="22.7" fill="none" stroke="#000" stroke-width="1.5"/>
<rect x="1741.4" y="1201.6" width="25.3" height="22.7" fill="none" stroke="#000" stroke-width="1.5"/>
<rect x="1815.8" y="1201.6" width="25.3" height="22.7" fill="none" stroke="#000" stroke-width="1.5"/>
<text class="S" x="1168.5" y="906.0" font-size="17.4" font-weight="700" text-anchor="middle" fill="#111">REISSUED</text>
<text class="S" x="1168.5" y="927.0" font-size="17.4" font-weight="700" text-anchor="middle" fill="#111">STATEMENT</text>
<text class="S" x="1262.0" y="902.0" font-size="10.7" font-weight="700" fill="#111">a</text>
<text class="S" x="1277.0" y="902.0" font-size="10.7" font-weight="700" fill="#111">Employee's social security number</text>
<text class="M" x="1345.0" y="925.2" font-size="19.5" stroke="#111" stroke-width="0.5" fill="#111">714-32-2105</text>
<text class="S" x="1605.0" y="921.6" font-size="10.7" fill="#111">OMB No. 1545-0008</text>
<text class="S" x="1719.0" y="900.9" font-size="10.69" fill="#111" style="white-space:pre">This information is being furnished to the Internal Revenue Service.  If you are required</text>
<text class="S" x="1719.0" y="914.3" font-size="10.69" fill="#111">to file a tax return, a negligence penalty or other sanction may be imposed on you if</text>
<text class="S" x="1719.0" y="927.2" font-size="10.69" fill="#111">this income is taxable and you fail to report it.</text>
<text class="S" x="1088.0" y="941.8" font-size="10.7" font-weight="700" fill="#111">b</text>
<text class="S" x="1102.6" y="941.8" font-size="10.7" fill="#111">Employer identification number</text>
<text class="M" x="1131.5" y="964.5" font-size="19.5" stroke="#111" stroke-width="0.5" fill="#111">24-3188810</text>
<text class="S" x="1088.0" y="982.0" font-size="10.7" font-weight="700" fill="#111">c</text>
<text class="S" x="1102.6" y="982.0" font-size="10.7" fill="#111">Employer's name, address, and ZIP code</text>
<text class="M" transform="matrix(1,0,0,0.857,1131.5,1005.6)" font-size="19.5" font-weight="700" stroke="#111" stroke-width="0.3" fill="#111">Adams, Chase and Gilbert Inc</text>
<text class="M" transform="matrix(1,0,0,0.857,1131.5,1032.4)" font-size="19.5" font-weight="700" stroke="#111" stroke-width="0.3" fill="#111">972 Gonzalez Dam</text>
<text class="M" transform="matrix(1,0,0,0.857,1131.5,1059.2)" font-size="19.5" font-weight="700" stroke="#111" stroke-width="0.3" fill="#111">South Katherine</text>
<text class="M" transform="matrix(1,0,0,0.857,1340.5,1059.2)" font-size="19.5" font-weight="700" stroke="#111" stroke-width="0.3" fill="#111">NC</text>
<text class="M" transform="matrix(1,0,0,0.857,1400.3,1059.2)" font-size="19.5" font-weight="700" stroke="#111" stroke-width="0.3" fill="#111">95869-5178</text>
<text class="S" x="1088.0" y="1103.0" font-size="10.7" font-weight="700" fill="#111">d</text>
<text class="S" x="1102.6" y="1103.0" font-size="10.7" fill="#111">Control number</text>
<text class="M" x="1131.5" y="1125.0" font-size="19.5" stroke="#111" stroke-width="0.5" fill="#111">1173038</text>
<text class="S" x="1088.0" y="1143.5" font-size="10.7" font-weight="700" fill="#111">e</text>
<text class="S" x="1102.6" y="1143.5" font-size="10.7" fill="#111">Employee's first name and initial</text>
<text class="S" x="1316.4" y="1143.5" font-size="10.7" fill="#111">Last name</text>
<text class="M" transform="matrix(1,0,0,0.857,1132.0,1186.1)" font-size="21.6" font-weight="700" stroke="#111" stroke-width="0.3" fill="#111">Samantha</text>
<text class="M" transform="matrix(1,0,0,0.857,1274.0,1186.1)" font-size="21.6" font-weight="700" stroke="#111" stroke-width="0.3" fill="#111">Martinez</text>
<text class="M" transform="matrix(1,0,0,0.857,1132.0,1217.3)" font-size="21.6" font-weight="700" stroke="#111" stroke-width="0.3" fill="#111">387 Burton Fords Apt. 407</text>
<text class="M" transform="matrix(1,0,0,0.857,1132.0,1247.0)" font-size="21.6" font-weight="700" stroke="#111" stroke-width="0.3" fill="#111">Brandontown</text>
<text class="M" transform="matrix(1,0,0,0.857,1315.0,1247.0)" font-size="21.6" font-weight="700" stroke="#111" stroke-width="0.3" fill="#111">ID</text>
<text class="M" transform="matrix(1,0,0,0.857,1404.0,1247.0)" font-size="21.6" font-weight="700" stroke="#111" stroke-width="0.3" fill="#111">12359-6940</text>
<text class="S" x="1088.5" y="1332.9" font-size="10.7" font-weight="700" fill="#111">f</text>
<text class="S" x="1102.6" y="1332.9" font-size="10.7" fill="#111">Employee's address and ZIP code</text>
<text class="S" x="1658.5" y="941.8" font-size="10.7" font-weight="700" fill="#111">1</text>
<text class="S" x="1684.8" y="941.8" font-size="10.7" fill="#111">Wages, tips, other compensation</text>
<text class="M" x="1695.3" y="964.5" font-size="19.5" stroke="#111" stroke-width="0.5" fill="#111">56081.18</text>
<text class="S" x="1907.0" y="941.8" font-size="10.7" font-weight="700" fill="#111">2</text>
<text class="S" x="1933.4" y="941.8" font-size="10.7" fill="#111">Federal income tax withheld</text>
<text class="M" x="1918.8" y="964.5" font-size="19.5" stroke="#111" stroke-width="0.5" fill="#111">19127.2</text>
<text class="S" x="1658.5" y="982.0" font-size="10.7" font-weight="700" fill="#111">3</text>
<text class="S" x="1684.8" y="982.0" font-size="10.7" fill="#111">Social security wages</text>
<text class="M" x="1695.3" y="1004.9" font-size="19.5" stroke="#111" stroke-width="0.5" fill="#111">66584.46</text>
<text class="S" x="1907.0" y="982.0" font-size="10.7" font-weight="700" fill="#111">4</text>
<text class="S" x="1933.4" y="982.0" font-size="10.7" fill="#111">Social security tax withheld</text>
<text class="M" x="1918.8" y="1004.9" font-size="19.5" stroke="#111" stroke-width="0.5" fill="#111">5093.71</text>
<text class="S" x="1658.5" y="1022.2" font-size="10.7" font-weight="700" fill="#111">5</text>
<text class="S" x="1684.8" y="1022.2" font-size="10.7" fill="#111">Medicare wages and tips</text>
<text class="M" x="1695.3" y="1045.3" font-size="19.5" stroke="#111" stroke-width="0.5" fill="#111">45427.75</text>
<text class="S" x="1907.0" y="1022.2" font-size="10.7" font-weight="700" fill="#111">6</text>
<text class="S" x="1933.4" y="1022.2" font-size="10.7" fill="#111">Medicare tax withheld</text>
<text class="M" x="1972.8" y="1045.3" font-size="19.5" stroke="#111" stroke-width="0.5" fill="#111">1317.4</text>
<text class="S" x="1658.5" y="1062.4" font-size="10.7" font-weight="700" fill="#111">7</text>
<text class="S" x="1684.8" y="1062.4" font-size="10.7" fill="#111">Social security tips</text>
<text class="M" x="1695.3" y="1085.6" font-size="19.5" stroke="#111" stroke-width="0.5" fill="#111">66584.46</text>
<text class="S" x="1907.0" y="1062.4" font-size="10.7" font-weight="700" fill="#111">8</text>
<text class="S" x="1933.4" y="1062.4" font-size="10.7" fill="#111">Allocated tips</text>
<text class="M" x="1972.8" y="1085.6" font-size="19.5" stroke="#111" stroke-width="0.5" fill="#111">45427.75</text>
<text class="S" x="1658.5" y="1103.1" font-size="10.7" font-weight="700" fill="#111">9</text>
<text class="S" x="1684.8" y="1103.1" font-size="10.7" fill="#111">Advance EIC payment</text>
<text class="S" x="1900.5" y="1103.1" font-size="10.7" font-weight="700" fill="#111">10</text>
<text class="S" x="1933.4" y="1103.1" font-size="10.7" fill="#111">Dependent care benefits</text>
<text class="M" x="1972.8" y="1125.0" font-size="19.5" stroke="#111" stroke-width="0.5" fill="#111">139</text>
<text class="S" x="1652.4" y="1143.3" font-size="10.7" font-weight="700" fill="#111">11</text>
<text class="S" x="1684.7" y="1143.3" font-size="10.7" fill="#111">Nonqualified plans</text>
<text class="M" x="1695.0" y="1172.0" font-size="19.5" stroke="#111" stroke-width="0.5" fill="#111">102</text>
<text class="S" x="1652.0" y="1188.7" font-size="10.7" font-weight="700" fill="#111">13</text>
<text class="S" x="1668.5" y="1188.7" font-size="8.8" fill="#111">Statutory</text>
<text class="S" x="1668.5" y="1199.6" font-size="8.8" fill="#111">employee</text>
<text class="S" x="1743.5" y="1188.7" font-size="8.8" fill="#111">Retirement</text>
<text class="S" x="1743.5" y="1199.6" font-size="8.8" fill="#111">plan</text>
<text class="S" x="1817.6" y="1188.7" font-size="8.8" fill="#111">Third-party</text>
<text class="S" x="1817.6" y="1199.6" font-size="8.8" fill="#111">sick pay</text>
<text class="S" x="1652.0" y="1236.8" font-size="10.7" font-weight="700" fill="#111">14</text>
<text class="S" x="1684.7" y="1236.8" font-size="10.7" fill="#111">Other (see enclosed Notice to Employee)</text>
<text class="S" x="1901.8" y="1143.3" font-size="10.7" font-weight="700" fill="#111">12a</text>
<text class="S" x="1934.3" y="1143.3" font-size="10.7" font-weight="700" fill="#111">See instructions for box 12</text>
<text class="M" transform="matrix(1,0,0,0.857,1936.0,1172.0)" font-size="19.5" font-weight="700" stroke="#111" stroke-width="0.3" fill="#111">E</text>
<text class="M" x="1973.2" y="1172.0" font-size="19.5" stroke="#111" stroke-width="0.5" fill="#111">5914</text>
<text class="S" x="1901.8" y="1189.8" font-size="10.7" font-weight="700" fill="#111">12b</text>
<text class="M" transform="matrix(1,0,0,0.857,1936.0,1217.0)" font-size="19.5" font-weight="700" stroke="#111" stroke-width="0.3" fill="#111">D</text>
<text class="M" x="1973.2" y="1217.0" font-size="19.5" stroke="#111" stroke-width="0.5" fill="#111">831</text>
<text class="S" x="1901.8" y="1236.8" font-size="10.7" font-weight="700" fill="#111">12c</text>
<text class="M" transform="matrix(1,0,0,0.857,1936.0,1266.5)" font-size="19.5" font-weight="700" stroke="#111" stroke-width="0.3" fill="#111">G</text>
<text class="M" x="1973.2" y="1266.5" font-size="19.5" stroke="#111" stroke-width="0.5" fill="#111">316</text>
<text class="S" x="1901.8" y="1283.5" font-size="10.7" font-weight="700" fill="#111">12d</text>
<text class="M" transform="matrix(1,0,0,0.857,1936.0,1312.3)" font-size="19.5" font-weight="700" stroke="#111" stroke-width="0.3" fill="#111">E</text>
<text class="M" x="1973.2" y="1312.3" font-size="19.5" stroke="#111" stroke-width="0.5" fill="#111">661</text>
<text class="S" x="1082.7" y="1347.1" font-size="10.7" font-weight="700" fill="#111">15</text>
<text class="S" x="1102.4" y="1347.1" font-size="10.7" fill="#111">State</text>
<text class="S" x="1152.5" y="1347.1" font-size="10.7" fill="#111">Employer's state ID number</text>
<text class="S" x="1374.6" y="1347.1" font-size="10.7" fill="#111">16</text>
<text class="S" x="1392.0" y="1347.1" font-size="10.7" fill="#111">State wages, tips, etc.</text>
<text class="S" x="1538.0" y="1347.1" font-size="10.7" fill="#111">17</text>
<text class="S" x="1555.8" y="1347.1" font-size="10.7" fill="#111">State income tax</text>
<text class="S" x="1697.5" y="1347.1" font-size="10.7" fill="#111">18</text>
<text class="S" x="1714.4" y="1347.1" font-size="10.7" fill="#111">Local wages, tips, etc.</text>
<text class="S" x="1871.4" y="1347.1" font-size="10.7" fill="#111">19</text>
<text class="S" x="1888.4" y="1347.1" font-size="10.7" fill="#111">Local income tax</text>
<text class="S" x="2030.0" y="1347.1" font-size="10.7" fill="#111">20</text>
<text class="S" x="2047.8" y="1347.1" font-size="10.7" fill="#111">Locality name</text>
<text class="M" transform="matrix(1,0,0,0.857,1092.5,1369.5)" font-size="19.5" font-weight="700" stroke="#111" stroke-width="0.3" fill="#111">WV</text>
<text class="M" x="1191.3" y="1369.5" font-size="19.5" stroke="#111" stroke-width="0.5" fill="#111">643-86-468</text>
<text class="M" x="1371.5" y="1369.5" font-size="19.5" stroke="#111" stroke-width="0.5" fill="#111">27219.05</text>
<text class="M" x="1535.6" y="1369.5" font-size="19.5" stroke="#111" stroke-width="0.5" fill="#111">1517.1</text>
<text class="M" x="1695.5" y="1369.5" font-size="19.5" stroke="#111" stroke-width="0.5" fill="#111">69617.91</text>
<text class="M" x="1868.8" y="1369.5" font-size="19.5" stroke="#111" stroke-width="0.5" fill="#111">7935.37</text>
<text class="M" transform="matrix(1,0,0,0.857,2028.3,1370.2)" font-size="11.3" font-weight="700" stroke="#111" stroke-width="0.3" fill="#111">Dominic Heights</text>
<text class="M" transform="matrix(1,0,0,0.857,1092.5,1409.5)" font-size="19.5" font-weight="700" stroke="#111" stroke-width="0.3" fill="#111">NJ</text>
<text class="M" x="1191.3" y="1409.5" font-size="19.5" stroke="#111" stroke-width="0.5" fill="#111">401-25-455</text>
<text class="M" x="1371.5" y="1409.5" font-size="19.5" stroke="#111" stroke-width="0.5" fill="#111">30829.36</text>
<text class="M" x="1535.6" y="1409.5" font-size="19.5" stroke="#111" stroke-width="0.5" fill="#111">1443.46</text>
<text class="M" x="1695.5" y="1409.5" font-size="19.5" stroke="#111" stroke-width="0.5" fill="#111">53793.26</text>
<text class="M" x="1868.8" y="1409.5" font-size="19.5" stroke="#111" stroke-width="0.5" fill="#111">11216.09</text>
<text class="M" transform="matrix(1,0,0,0.857,2028.3,1410.2)" font-size="14.4" font-weight="700" stroke="#111" stroke-width="0.3" fill="#111">Robles Mount</text>
<text class="S" x="1196.0" y="1435.8" font-size="19.5" font-weight="700" fill="#111">Wage and Tax</text>
<text class="S" x="1196.0" y="1460.5" font-size="19.5" font-weight="700" fill="#111">Statement</text>
<text class="S" x="1081.0" y="1459.8" font-size="11.8" font-weight="700" fill="#111" style="white-space:pre">Form  W-2</text>
<g transform="translate(0,694)" fill="none" stroke="#111" stroke-width="4.1" stroke-linecap="round" stroke-linejoin="round"><path d="M1548.3,733 H1563 Q1566,733 1566,736 V744.6 Q1566,747.6 1563,747.6 H1551.3 Q1548.4,747.6 1548.4,750.6 V762.7 H1566"/><path d="M1583,733 H1594.1 Q1597.1,733 1597.1,736 V759.7 Q1597.1,762.7 1594.1,762.7 H1583 Q1580,762.7 1580,759.7 V736 Q1580,733 1583,733 Z"/><path d="M1610.8,733 H1620 V762.7 M1610.8,762.7 H1628.5 V751.5" /><path d="M1645.3,733 H1657.1 Q1660.1,733 1660.1,736 V759.7 Q1660.1,762.7 1657.1,762.7 H1645.3 Q1642.3,762.7 1642.3,759.7 V736 Q1642.3,733 1645.3,733 Z"/></g>
<text class="S" x="1820.4" y="1437.0" font-size="12.9" fill="#111">Department of the Treasury--Internal Revenue Service</text>
<text class="S" x="1081.0" y="1478.8" font-size="14.05" font-weight="700" fill="#111">Copy C For EMPLOYEE'S RECORDS.</text>
<text class="S" x="1081.0" y="1495.6" font-size="14.05" font-weight="700" fill="#111">(See enclosed Notice to Employee.)</text>
<text class="S" x="1868.5" y="1457.7" font-size="12.75" font-weight="700" fill="#111">Safe, accurate,</text>
<text class="S" x="1868.5" y="1474.6" font-size="12.75" font-weight="700" fill="#111" style="white-space:pre">FAST!  Use</text>
<g transform="translate(2030.0,1462.8) scale(0.972,0.956)"><ellipse cx="0" cy="0" rx="59" ry="13.7" fill="#1a1a1a"/><text class="S" transform="matrix(1.15,0,0,1,-55,1)" font-size="10.2" font-weight="700" font-style="italic" fill="#fff" stroke="#fff" stroke-width="0.4">IRS</text><text class="S" transform="matrix(1.22,0,0,1,-41.5,8.6)" font-size="29.5" font-weight="700" font-style="italic" fill="#fff" stroke="#fff" stroke-width="0.9">e</text><path d="M-20.5,3 L-6.5,-2.6 L-7.8,0.2 L4.5,-4.6 L-10.5,4.6 L-8.9,1.6 Z" fill="#fff"/><text class="S" transform="matrix(1.2,0,0,1,1.7,8.3)" font-size="23.7" font-weight="700" font-style="italic" fill="#fff" stroke="#fff" stroke-width="0.8" letter-spacing="0.4">file</text></g></g>
  </svg>
</div>
<svg class="a" style="left:2300px;top:300px" width="48" height="40" viewBox="2300 300 48 40"><path d="M2318.8,317.2 L2324.2,314.9 L2326,314.9 L2326,332 L2323.5,332 L2323.5,318.2 L2318.8,319.9 Z" fill="#111"/></svg>
</div>
</body></html>
